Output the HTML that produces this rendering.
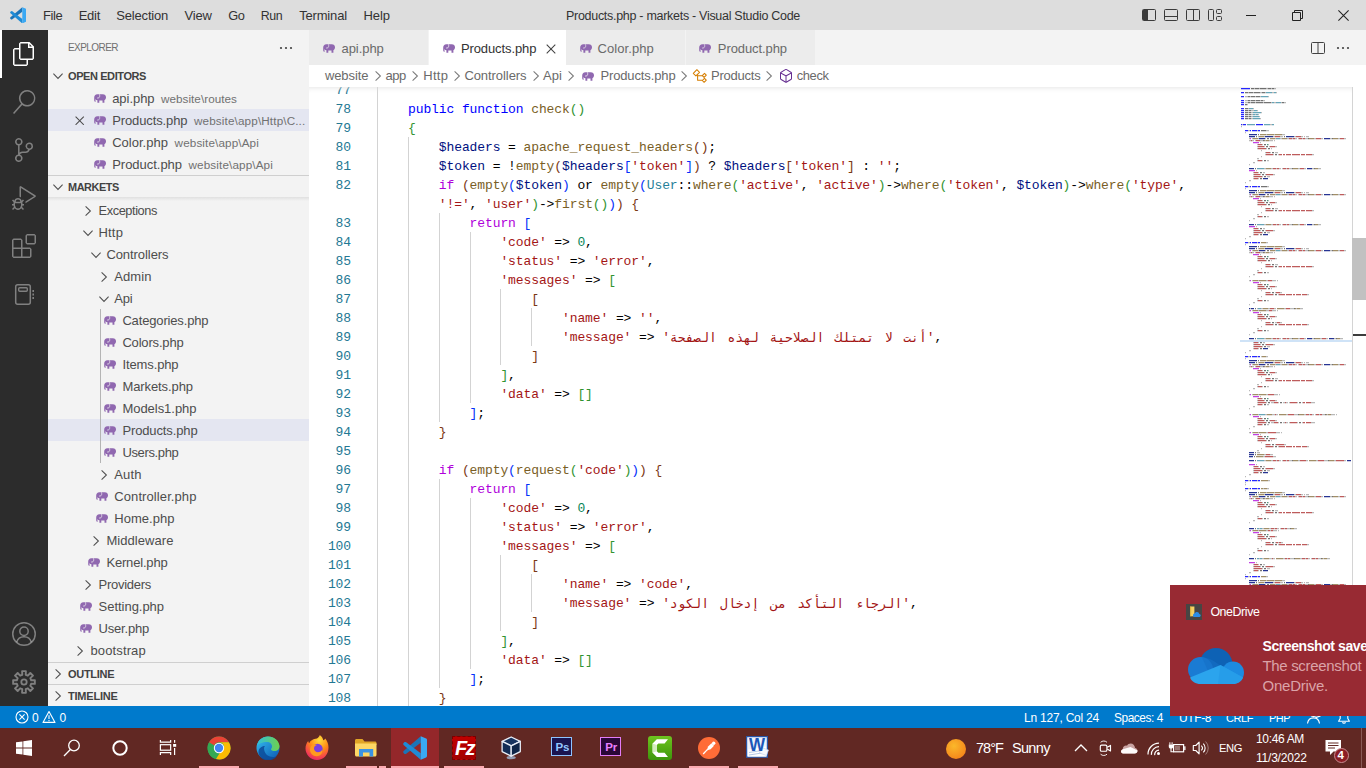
<!DOCTYPE html>
<html lang="en"><head><meta charset="utf-8"><title>Products.php - markets - Visual Studio Code</title>
<style>
html,body{margin:0;padding:0}
body{width:1366px;height:768px;overflow:hidden;position:relative;background:#fff;font-family:"Liberation Sans","DejaVu Sans",sans-serif;}
.b{position:absolute;display:block}
.t{position:absolute;white-space:pre;line-height:20px;height:20px}
.code{position:absolute;white-space:pre;font-family:"Liberation Mono","DejaVu Sans Mono",monospace;font-size:13px;letter-spacing:-0.1015px;line-height:19px;height:19px;color:#000}
.ln{position:absolute;white-space:pre;font-family:"Liberation Mono","DejaVu Sans Mono",monospace;font-size:13px;letter-spacing:-0.1015px;line-height:19px;height:19px;color:#237893;text-align:right;width:42px;left:309px}
.ar{font-family:"DejaVu Sans Mono","Liberation Mono",monospace;letter-spacing:0}
.k{color:#00f}.c{color:#af00db}.f{color:#795e26}.v{color:#001080}.s{color:#a31515}.n{color:#098658}.y{color:#267f99}
.b1{color:#0431fa}.b2{color:#319331}.b3{color:#7b3814}
</style></head><body>
<div class="b" style="left:0px;top:0px;width:1366px;height:30px;background:#dddddd;"></div>
<div class="b" style="left:0px;top:30px;width:48px;height:676px;background:#2c2c2c;"></div>
<div class="b" style="left:48px;top:30px;width:261px;height:676px;background:#f3f3f3;"></div>
<div class="b" style="left:309px;top:30px;width:1057px;height:35px;background:#f3f3f3;"></div>
<div class="b" style="left:0px;top:706px;width:1366px;height:22px;background:#007acc;"></div>
<div class="b" style="left:0px;top:728px;width:1366px;height:40px;background:#612823;"></div>
<svg class="b" style="left:9.5px;top:6.8px;" width="16.6" height="16.6" viewBox="0 0 100 100"><path fill="#1b74b8" d="M74 1L74 28L12 75.500L6.500 75L1.200 70V63.500Z"/><path fill="#1f8bd6" d="M74 99L74 72L12 24.500L6.500 25L1.200 30V36.500Z"/><path fill="#3aa8f3" d="M74 1L96.500 10.800Q100 12.500 100 16.400V83.600Q100 87.500 96.500 89.200L74 99Z"/></svg>
<span class="t" style="left:43.0px;top:6.0px;font-size:13px;color:#333;letter-spacing:-0.387px;">File</span>
<span class="t" style="left:78.7px;top:6.0px;font-size:13px;color:#333;letter-spacing:-0.275px;">Edit</span>
<span class="t" style="left:116.2px;top:6.0px;font-size:13px;color:#333;letter-spacing:-0.164px;">Selection</span>
<span class="t" style="left:184.5px;top:6.0px;font-size:13px;color:#333;letter-spacing:-0.211px;">View</span>
<span class="t" style="left:228.2px;top:6.0px;font-size:12.8px;color:#333;letter-spacing:-0.387px;">Go</span>
<span class="t" style="left:260.8px;top:6.0px;font-size:12.4px;color:#333;letter-spacing:-0.416px;">Run</span>
<span class="t" style="left:299.2px;top:6.0px;font-size:13px;color:#333;letter-spacing:-0.178px;">Terminal</span>
<span class="t" style="left:363.5px;top:6.0px;font-size:13px;color:#333;letter-spacing:-0.059px;">Help</span>
<span class="t" style="left:566.0px;top:6.0px;font-size:12.5px;color:#333;letter-spacing:-0.289px;">Products.php - markets - Visual Studio Code</span>
<svg class="b" style="left:1141px;top:7px;" width="16" height="16" viewBox="0 0 16 16"><rect x="1.500" y="2.500" width="13" height="11" rx="1" fill="none" stroke="#3b3b3b"/><rect x="2" y="3" width="5" height="10" fill="#3b3b3b"/></svg>
<svg class="b" style="left:1163px;top:7px;" width="16" height="16" viewBox="0 0 16 16"><rect x="1.500" y="2.500" width="13" height="11" rx="1" fill="none" stroke="#3b3b3b"/><path d="M2 9.500h12" stroke="#3b3b3b"/></svg>
<svg class="b" style="left:1185px;top:7px;" width="16" height="16" viewBox="0 0 16 16"><rect x="1.500" y="2.500" width="13" height="11" rx="1" fill="none" stroke="#3b3b3b"/><path d="M8.500 3v10" stroke="#3b3b3b"/></svg>
<svg class="b" style="left:1207px;top:7px;" width="16" height="16" viewBox="0 0 16 16"><rect x="1.500" y="2.500" width="5" height="11" rx="1" fill="none" stroke="#3b3b3b"/><rect x="9.500" y="2.500" width="5" height="4" rx="1" fill="none" stroke="#3b3b3b"/><rect x="9.500" y="9.500" width="5" height="4" rx="1" fill="none" stroke="#3b3b3b"/></svg>
<svg class="b" style="left:1246px;top:10px;" width="11" height="11" viewBox="0 0 11 11"><path d="M0 5.500h10" stroke="#222" stroke-width="1"/></svg>
<svg class="b" style="left:1292px;top:10px;" width="11" height="11" viewBox="0 0 11 11"><path d="M0.500 2.500h8v8h-8z M2.500 2.500v-2h8v8h-2" fill="none" stroke="#222" stroke-width="1"/></svg>
<svg class="b" style="left:1338px;top:9.5px;" width="11" height="11" viewBox="0 0 11 11"><path d="M0.400 0.400l10.200 10.200M10.600 0.400l-10.200 10.200" stroke="#222" stroke-width="1.050"/></svg>
<div class="b" style="left:0px;top:30px;width:2px;height:48px;background:#ffffff;"></div>
<svg class="b" style="left:12px;top:42px;" width="24" height="24" viewBox="0 0 24 24"><path fill="#fff" d="M17.500 0h-9L7 1.500V6H2.500L1 7.500v15.070L2.500 24h12.070L16 22.570V18h4.700l1.300-1.430V4.500L17.500 0zm0 2.120l2.380 2.380H17.500V2.120zm-3 20.380h-12v-15H7v9.070L8.500 18h6v4.500zm6-6h-12v-15H16V6h4.500v10.500z"/></svg>
<svg class="b" style="left:12px;top:90px;" width="24" height="24" viewBox="0 0 24 24"><path fill="rgba(255,255,255,.4)" d="M15.250 0a8.250 8.250 0 0 0-6.180 13.720L1 22.880l1.120 1.120 8.050-9.120A8.251 8.251 0 1 0 15.250.010V0zm0 15a6.750 6.750 0 1 1 0-13.500 6.750 6.750 0 0 1 0 13.500z"/></svg>
<svg class="b" style="left:12px;top:138px;" width="24" height="24" viewBox="0 0 24 24"><path fill="rgba(255,255,255,.4)" d="M21.007 8.222A3.738 3.738 0 0 0 15.045 5.200a3.737 3.737 0 0 0 1.156 6.583 2.988 2.988 0 0 1-2.668 1.670h-2.990a4.456 4.456 0 0 0-2.989 1.165V7.400a3.737 3.737 0 1 0-1.494 0v9.117a3.776 3.776 0 1 0 1.816.099 2.990 2.990 0 0 1 2.668-1.667h2.990a4.484 4.484 0 0 0 4.223-3.039 3.736 3.736 0 0 0 3.250-3.687zM4.565 3.738a2.242 2.242 0 1 1 4.484 0 2.242 2.242 0 0 1-4.484 0zm4.484 16.441a2.242 2.242 0 1 1-4.484 0 2.242 2.242 0 0 1 4.484 0zm8.221-9.715a2.242 2.242 0 1 1 0-4.485 2.242 2.242 0 0 1 0 4.485z"/></svg>
<svg class="b" style="left:12px;top:186px;" width="24" height="24" viewBox="0 0 24 24"><path fill="rgba(255,255,255,.4)" d="M10.940 13.500l-1.320 1.320a3.730 3.730 0 0 0-7.240 0L1.060 13.500 0 14.560l1.720 1.720-.220.220V18H0v1.500h1.500v.080c.077.489.214.966.410 1.420L0 22.940 1.060 24l1.650-1.650A4.308 4.308 0 0 0 6 24a4.310 4.310 0 0 0 3.290-1.650L10.940 24 12 22.940 10.090 21c.198-.464.336-.951.410-1.450v-.100H12V18h-1.500v-1.500l-.220-.220L12 14.560l-1.060-1.060zM6 13.500a2.250 2.250 0 0 1 2.250 2.250h-4.500A2.250 2.250 0 0 1 6 13.500zm3 6a3.330 3.330 0 0 1-3 3 3.330 3.330 0 0 1-3-3v-2.250h6v2.250zm14.760-9.900v1.260L13.500 17.370V15.600l8.500-5.370L9 2v9.460a5.070 5.070 0 0 0-1.500-.720V.630L8.640 0l15.120 9.600z"/></svg>
<svg class="b" style="left:12px;top:234px;" width="24" height="24" viewBox="0 0 24 24"><path fill="rgba(255,255,255,.4)" d="M13.500 1.500L15 0h7.500L24 1.500V9l-1.500 1.500H15L13.500 9V1.500zm1.500 0V9h7.500V1.500H15zM0 15V6l1.500-1.500H9L10.500 6v7.500H18l1.500 1.500v7.500L18 24H1.500L0 22.500V15zm9-1.500V6H1.500v7.500H9zM9 15H1.500v7.500H9V15zm1.500 7.500H18V15h-7.500v7.500z"/></svg>
<svg class="b" style="left:12px;top:282px;" width="24" height="24" viewBox="0 0 24 24"><rect x="3.700" y="2.700" width="14.600" height="19.600" rx="2" fill="none" stroke="rgba(255,255,255,.4)" stroke-width="1.500"/><rect x="6.700" y="5.700" width="8.600" height="3.600" rx="1" fill="none" stroke="rgba(255,255,255,.4)" stroke-width="1.400"/><path d="M21.200 8v2M21.200 11.500v2M21.200 15v2" stroke="rgba(255,255,255,.4)" stroke-width="1.600"/></svg>
<svg class="b" style="left:12px;top:622px;" width="24" height="24" viewBox="0 0 24 24"><circle cx="12" cy="12" r="11.250" fill="none" stroke="rgba(255,255,255,.4)" stroke-width="1.500"/><circle cx="12" cy="9.300" r="4.200" fill="none" stroke="rgba(255,255,255,.4)" stroke-width="1.500"/><path d="M4.700 20.300c.900-3.600 3.700-5.600 7.300-5.600s6.400 2 7.300 5.600" fill="none" stroke="rgba(255,255,255,.4)" stroke-width="1.500"/></svg>
<svg class="b" style="left:12px;top:670px;" width="24" height="24" viewBox="0 0 24 24"><path d="M10.11 1.16L13.89 1.16L13.73 4.80L15.87 5.69L18.33 3.00L21.00 5.67L18.31 8.13L19.20 10.27L22.84 10.11L22.84 13.89L19.20 13.73L18.31 15.87L21.00 18.33L18.33 21.00L15.87 18.31L13.73 19.20L13.89 22.84L10.11 22.84L10.27 19.20L8.13 18.31L5.67 21.00L3.00 18.33L5.69 15.87L4.80 13.73L1.16 13.89L1.16 10.11L4.80 10.27L5.69 8.13L3.00 5.67L5.67 3.00L8.13 5.69L10.27 4.80Z" fill="none" stroke="rgba(255,255,255,.4)" stroke-width="1.900" stroke-linejoin="round"/><circle cx="12" cy="12" r="2.700" fill="none" stroke="rgba(255,255,255,.4)" stroke-width="1.800"/></svg>
<span class="t" style="left:68.0px;top:38.0px;font-size:10px;color:#6f6f6f;letter-spacing:-0.558px;">EXPLORER</span>
<svg class="b" style="left:278px;top:40px;" width="16" height="16" viewBox="0 0 16 16"><circle cx="3" cy="8" r="1.100" fill="#424242"/><circle cx="8" cy="8" r="1.100" fill="#424242"/><circle cx="13" cy="8" r="1.100" fill="#424242"/></svg>
<svg class="b" style="left:50px;top:68px;" width="16" height="16" viewBox="0 0 16 16"><path d="M3.400 5.600L8 10.400L12.600 5.600" fill="none" stroke="#4f4f4f" stroke-width="1.050"/></svg>
<span class="t" style="left:68.0px;top:66.0px;font-size:11px;color:#424242;letter-spacing:-0.410px;font-weight:700;">OPEN EDITORS</span>
<div class="b" style="left:48px;top:109px;width:261px;height:22px;background:#e4e6f1;"></div>
<svg class="b" style="left:75.3px;top:115.7px;" width="9.4" height="9.4" viewBox="0 0 9.4 9.4"><path d="M0.600 0.600l8.200 8.200M8.800 0.600l-8.200 8.200" stroke="#4a4a4a" stroke-width="1.050"/></svg>
<svg class="b" style="left:94px;top:93.5px;" width="12" height="9" viewBox="0 0 12 9"><path fill="#9068b0" d="M3.3 0.2C1.4 0.2 0.2 1.5 0.2 3.4V6.2c0 .9.5 1.5 1.2 1.6l.5-.9c-.4-.1-.6-.4-.6-.9V5.2c.5.6 1.3 1 2.1 1.1V8.8H5.3V6.6h3.2V8.8h1.9V6.2c1-.6 1.6-1.7 1.6-3C12 1.4 10.600.2 8.800.2z"/><path fill="none" stroke="#f3f3f3" stroke-width=".7" d="M5.400.3c.5.900.5 2.400-.3 3.300-.6.500-1.300.600-2 .400"/></svg>
<span class="t" style="left:112.2px;top:88.5px;font-size:13px;color:#4d4d4d;letter-spacing:-0.050px;">api.php</span>
<span class="t" style="left:161.0px;top:89.0px;font-size:11.7px;color:#717171;letter-spacing:0.040px;">website\routes</span>
<svg class="b" style="left:94px;top:115.5px;" width="12" height="9" viewBox="0 0 12 9"><path fill="#9068b0" d="M3.3 0.2C1.4 0.2 0.2 1.5 0.2 3.4V6.2c0 .9.5 1.5 1.2 1.6l.5-.9c-.4-.1-.6-.4-.6-.9V5.2c.5.6 1.3 1 2.1 1.1V8.8H5.3V6.6h3.2V8.8h1.9V6.2c1-.6 1.6-1.7 1.6-3C12 1.4 10.600.2 8.800.2z"/><path fill="none" stroke="#e4e6f1" stroke-width=".7" d="M5.400.3c.5.900.5 2.400-.3 3.300-.6.500-1.300.600-2 .400"/></svg>
<span class="t" style="left:112.2px;top:110.5px;font-size:13px;color:#4d4d4d;letter-spacing:-0.109px;">Products.php</span>
<span class="t" style="left:194.0px;top:111.0px;font-size:11.7px;color:#717171;letter-spacing:0.138px;">website\app\Http\C...</span>
<svg class="b" style="left:94px;top:137.5px;" width="12" height="9" viewBox="0 0 12 9"><path fill="#9068b0" d="M3.3 0.2C1.4 0.2 0.2 1.5 0.2 3.4V6.2c0 .9.5 1.5 1.2 1.6l.5-.9c-.4-.1-.6-.4-.6-.9V5.2c.5.6 1.3 1 2.1 1.1V8.8H5.3V6.6h3.2V8.8h1.9V6.2c1-.6 1.6-1.7 1.6-3C12 1.4 10.600.2 8.800.2z"/><path fill="none" stroke="#f3f3f3" stroke-width=".7" d="M5.400.3c.5.900.5 2.400-.3 3.300-.6.500-1.300.600-2 .400"/></svg>
<span class="t" style="left:112.2px;top:132.5px;font-size:13px;color:#4d4d4d;letter-spacing:0.017px;">Color.php</span>
<span class="t" style="left:174.6px;top:133.0px;font-size:11.7px;color:#717171;letter-spacing:0.120px;">website\app\Api</span>
<svg class="b" style="left:94px;top:159.5px;" width="12" height="9" viewBox="0 0 12 9"><path fill="#9068b0" d="M3.3 0.2C1.4 0.2 0.2 1.5 0.2 3.4V6.2c0 .9.5 1.5 1.2 1.6l.5-.9c-.4-.1-.6-.4-.6-.9V5.2c.5.6 1.3 1 2.1 1.1V8.8H5.3V6.6h3.2V8.8h1.9V6.2c1-.6 1.6-1.7 1.6-3C12 1.4 10.600.2 8.800.2z"/><path fill="none" stroke="#f3f3f3" stroke-width=".7" d="M5.400.3c.5.900.5 2.400-.3 3.300-.6.500-1.300.600-2 .400"/></svg>
<span class="t" style="left:112.2px;top:154.5px;font-size:13px;color:#4d4d4d;letter-spacing:-0.028px;">Product.php</span>
<span class="t" style="left:188.5px;top:155.0px;font-size:11.7px;color:#717171;letter-spacing:0.126px;">website\app\Api</span>
<div class="b" style="left:48px;top:175px;width:261px;height:1px;background:#cfcfcf;"></div>
<svg class="b" style="left:50px;top:179px;" width="16" height="16" viewBox="0 0 16 16"><path d="M3.400 5.600L8 10.400L12.600 5.600" fill="none" stroke="#4f4f4f" stroke-width="1.050"/></svg>
<span class="t" style="left:68.0px;top:177.0px;font-size:10.9px;color:#424242;letter-spacing:-0.413px;font-weight:700;">MARKETS</span>
<div class="b" style="left:48px;top:197px;width:261px;height:4px;background:linear-gradient(#e0e0e0,rgba(243,243,243,0))"></div>
<div class="b" style="left:48px;top:419px;width:261px;height:22px;background:#e4e6f1;"></div>
<div class="b" style="left:100px;top:309px;width:1px;height:154px;background:#b4b4b4;"></div>
<svg class="b" style="left:79.5px;top:202.5px;" width="16" height="16" viewBox="0 0 16 16"><path d="M5.600 3.400L10.400 8L5.600 12.600" fill="none" stroke="#4f4f4f" stroke-width="1.050"/></svg>
<span class="t" style="left:98.6px;top:200.5px;font-size:12.8px;color:#4d4d4d;letter-spacing:-0.421px;">Exceptions</span>
<svg class="b" style="left:79.5px;top:224.5px;" width="16" height="16" viewBox="0 0 16 16"><path d="M3.400 5.600L8 10.400L12.600 5.600" fill="none" stroke="#4f4f4f" stroke-width="1.050"/></svg>
<span class="t" style="left:98.6px;top:222.5px;font-size:13px;color:#4d4d4d;letter-spacing:0.140px;">Http</span>
<svg class="b" style="left:87.5px;top:246.5px;" width="16" height="16" viewBox="0 0 16 16"><path d="M3.400 5.600L8 10.400L12.600 5.600" fill="none" stroke="#4f4f4f" stroke-width="1.050"/></svg>
<span class="t" style="left:106.4px;top:244.5px;font-size:13px;color:#4d4d4d;letter-spacing:-0.069px;">Controllers</span>
<svg class="b" style="left:95.5px;top:268.5px;" width="16" height="16" viewBox="0 0 16 16"><path d="M5.600 3.400L10.400 8L5.600 12.600" fill="none" stroke="#4f4f4f" stroke-width="1.050"/></svg>
<span class="t" style="left:114.3px;top:266.5px;font-size:13px;color:#4d4d4d;letter-spacing:0.070px;">Admin</span>
<svg class="b" style="left:95.5px;top:290.5px;" width="16" height="16" viewBox="0 0 16 16"><path d="M3.400 5.600L8 10.400L12.600 5.600" fill="none" stroke="#4f4f4f" stroke-width="1.050"/></svg>
<span class="t" style="left:114.3px;top:288.5px;font-size:13px;color:#4d4d4d;letter-spacing:-0.196px;">Api</span>
<svg class="b" style="left:104px;top:315.5px;" width="12" height="9" viewBox="0 0 12 9"><path fill="#9068b0" d="M3.3 0.2C1.4 0.2 0.2 1.5 0.2 3.4V6.2c0 .9.5 1.5 1.2 1.6l.5-.9c-.4-.1-.6-.4-.6-.9V5.2c.5.6 1.3 1 2.1 1.1V8.8H5.3V6.6h3.2V8.8h1.9V6.2c1-.6 1.6-1.7 1.6-3C12 1.4 10.600.2 8.800.2z"/><path fill="none" stroke="#f3f3f3" stroke-width=".7" d="M5.400.3c.5.900.5 2.400-.3 3.300-.6.500-1.300.600-2 .400"/></svg>
<span class="t" style="left:122.4px;top:310.5px;font-size:13px;color:#4d4d4d;letter-spacing:-0.155px;">Categories.php</span>
<svg class="b" style="left:104px;top:337.5px;" width="12" height="9" viewBox="0 0 12 9"><path fill="#9068b0" d="M3.3 0.2C1.4 0.2 0.2 1.5 0.2 3.4V6.2c0 .9.5 1.5 1.2 1.6l.5-.9c-.4-.1-.6-.4-.6-.9V5.2c.5.6 1.3 1 2.1 1.1V8.8H5.3V6.6h3.2V8.8h1.9V6.2c1-.6 1.6-1.7 1.6-3C12 1.4 10.600.2 8.800.2z"/><path fill="none" stroke="#f3f3f3" stroke-width=".7" d="M5.400.3c.5.900.5 2.400-.3 3.300-.6.500-1.300.600-2 .400"/></svg>
<span class="t" style="left:122.4px;top:332.5px;font-size:13px;color:#4d4d4d;letter-spacing:-0.177px;">Colors.php</span>
<svg class="b" style="left:104px;top:359.5px;" width="12" height="9" viewBox="0 0 12 9"><path fill="#9068b0" d="M3.3 0.2C1.4 0.2 0.2 1.5 0.2 3.4V6.2c0 .9.5 1.5 1.2 1.6l.5-.9c-.4-.1-.6-.4-.6-.9V5.2c.5.6 1.3 1 2.1 1.1V8.8H5.3V6.6h3.2V8.8h1.9V6.2c1-.6 1.6-1.7 1.6-3C12 1.4 10.600.2 8.800.2z"/><path fill="none" stroke="#f3f3f3" stroke-width=".7" d="M5.400.3c.5.900.5 2.400-.3 3.300-.6.500-1.300.600-2 .400"/></svg>
<span class="t" style="left:122.4px;top:354.5px;font-size:13px;color:#4d4d4d;letter-spacing:-0.109px;">Items.php</span>
<svg class="b" style="left:104px;top:381.5px;" width="12" height="9" viewBox="0 0 12 9"><path fill="#9068b0" d="M3.3 0.2C1.4 0.2 0.2 1.5 0.2 3.4V6.2c0 .9.5 1.5 1.2 1.6l.5-.9c-.4-.1-.6-.4-.6-.9V5.2c.5.6 1.3 1 2.1 1.1V8.8H5.3V6.6h3.2V8.8h1.9V6.2c1-.6 1.6-1.7 1.6-3C12 1.4 10.600.2 8.800.2z"/><path fill="none" stroke="#f3f3f3" stroke-width=".7" d="M5.400.3c.5.900.5 2.400-.3 3.300-.6.500-1.300.600-2 .400"/></svg>
<span class="t" style="left:122.4px;top:376.5px;font-size:13px;color:#4d4d4d;letter-spacing:-0.085px;">Markets.php</span>
<svg class="b" style="left:104px;top:403.5px;" width="12" height="9" viewBox="0 0 12 9"><path fill="#9068b0" d="M3.3 0.2C1.4 0.2 0.2 1.5 0.2 3.4V6.2c0 .9.5 1.5 1.2 1.6l.5-.9c-.4-.1-.6-.4-.6-.9V5.2c.5.6 1.3 1 2.1 1.1V8.8H5.3V6.6h3.2V8.8h1.9V6.2c1-.6 1.6-1.7 1.6-3C12 1.4 10.600.2 8.800.2z"/><path fill="none" stroke="#f3f3f3" stroke-width=".7" d="M5.400.3c.5.900.5 2.400-.3 3.300-.6.500-1.300.600-2 .400"/></svg>
<span class="t" style="left:122.4px;top:398.5px;font-size:13px;color:#4d4d4d;letter-spacing:-0.031px;">Models1.php</span>
<svg class="b" style="left:104px;top:425.5px;" width="12" height="9" viewBox="0 0 12 9"><path fill="#9068b0" d="M3.3 0.2C1.4 0.2 0.2 1.5 0.2 3.4V6.2c0 .9.5 1.5 1.2 1.6l.5-.9c-.4-.1-.6-.4-.6-.9V5.2c.5.6 1.3 1 2.1 1.1V8.8H5.3V6.6h3.2V8.8h1.9V6.2c1-.6 1.6-1.7 1.6-3C12 1.4 10.600.2 8.800.2z"/><path fill="none" stroke="#e4e6f1" stroke-width=".7" d="M5.400.3c.5.900.5 2.400-.3 3.300-.6.500-1.300.600-2 .400"/></svg>
<span class="t" style="left:122.4px;top:420.5px;font-size:13px;color:#4d4d4d;letter-spacing:-0.125px;">Products.php</span>
<svg class="b" style="left:104px;top:447.5px;" width="12" height="9" viewBox="0 0 12 9"><path fill="#9068b0" d="M3.3 0.2C1.4 0.2 0.2 1.5 0.2 3.4V6.2c0 .9.5 1.5 1.2 1.6l.5-.9c-.4-.1-.6-.4-.6-.9V5.2c.5.6 1.3 1 2.1 1.1V8.8H5.3V6.6h3.2V8.8h1.9V6.2c1-.6 1.6-1.7 1.6-3C12 1.4 10.600.2 8.800.2z"/><path fill="none" stroke="#f3f3f3" stroke-width=".7" d="M5.400.3c.5.900.5 2.400-.3 3.300-.6.500-1.300.600-2 .400"/></svg>
<span class="t" style="left:122.4px;top:442.5px;font-size:13px;color:#4d4d4d;letter-spacing:-0.350px;">Users.php</span>
<svg class="b" style="left:95.5px;top:466.5px;" width="16" height="16" viewBox="0 0 16 16"><path d="M5.600 3.400L10.400 8L5.600 12.600" fill="none" stroke="#4f4f4f" stroke-width="1.050"/></svg>
<span class="t" style="left:114.3px;top:464.5px;font-size:13px;color:#4d4d4d;letter-spacing:0.114px;">Auth</span>
<svg class="b" style="left:96px;top:491.5px;" width="12" height="9" viewBox="0 0 12 9"><path fill="#9068b0" d="M3.3 0.2C1.4 0.2 0.2 1.5 0.2 3.4V6.2c0 .9.5 1.5 1.2 1.6l.5-.9c-.4-.1-.6-.4-.6-.9V5.2c.5.6 1.3 1 2.1 1.1V8.8H5.3V6.6h3.2V8.8h1.9V6.2c1-.6 1.6-1.7 1.6-3C12 1.4 10.600.2 8.800.2z"/><path fill="none" stroke="#f3f3f3" stroke-width=".7" d="M5.400.3c.5.900.5 2.400-.3 3.300-.6.500-1.300.600-2 .400"/></svg>
<span class="t" style="left:114.3px;top:486.5px;font-size:13px;color:#4d4d4d;letter-spacing:0.090px;">Controller.php</span>
<svg class="b" style="left:96px;top:513.5px;" width="12" height="9" viewBox="0 0 12 9"><path fill="#9068b0" d="M3.3 0.2C1.4 0.2 0.2 1.5 0.2 3.4V6.2c0 .9.5 1.5 1.2 1.6l.5-.9c-.4-.1-.6-.4-.6-.9V5.2c.5.6 1.3 1 2.1 1.1V8.8H5.3V6.6h3.2V8.8h1.9V6.2c1-.6 1.6-1.7 1.6-3C12 1.4 10.600.2 8.800.2z"/><path fill="none" stroke="#f3f3f3" stroke-width=".7" d="M5.400.3c.5.900.5 2.400-.3 3.300-.6.500-1.300.600-2 .400"/></svg>
<span class="t" style="left:114.3px;top:508.5px;font-size:13px;color:#4d4d4d;letter-spacing:0.028px;">Home.php</span>
<svg class="b" style="left:87.5px;top:532.5px;" width="16" height="16" viewBox="0 0 16 16"><path d="M5.600 3.400L10.400 8L5.600 12.600" fill="none" stroke="#4f4f4f" stroke-width="1.050"/></svg>
<span class="t" style="left:106.4px;top:530.5px;font-size:13px;color:#4d4d4d;letter-spacing:0.063px;">Middleware</span>
<svg class="b" style="left:88px;top:557.5px;" width="12" height="9" viewBox="0 0 12 9"><path fill="#9068b0" d="M3.3 0.2C1.4 0.2 0.2 1.5 0.2 3.4V6.2c0 .9.5 1.5 1.2 1.6l.5-.9c-.4-.1-.6-.4-.6-.9V5.2c.5.6 1.3 1 2.1 1.1V8.8H5.3V6.6h3.2V8.8h1.9V6.2c1-.6 1.6-1.7 1.6-3C12 1.4 10.600.2 8.800.2z"/><path fill="none" stroke="#f3f3f3" stroke-width=".7" d="M5.400.3c.5.900.5 2.400-.3 3.300-.6.500-1.300.600-2 .400"/></svg>
<span class="t" style="left:106.4px;top:552.5px;font-size:13px;color:#4d4d4d;letter-spacing:-0.178px;">Kernel.php</span>
<svg class="b" style="left:79.5px;top:576.5px;" width="16" height="16" viewBox="0 0 16 16"><path d="M5.600 3.400L10.400 8L5.600 12.600" fill="none" stroke="#4f4f4f" stroke-width="1.050"/></svg>
<span class="t" style="left:98.6px;top:574.5px;font-size:13px;color:#4d4d4d;letter-spacing:-0.279px;">Providers</span>
<svg class="b" style="left:80px;top:601.5px;" width="12" height="9" viewBox="0 0 12 9"><path fill="#9068b0" d="M3.3 0.2C1.4 0.2 0.2 1.5 0.2 3.4V6.2c0 .9.5 1.5 1.2 1.6l.5-.9c-.4-.1-.6-.4-.6-.9V5.2c.5.6 1.3 1 2.1 1.1V8.8H5.3V6.6h3.2V8.8h1.9V6.2c1-.6 1.6-1.7 1.6-3C12 1.4 10.600.2 8.800.2z"/><path fill="none" stroke="#f3f3f3" stroke-width=".7" d="M5.400.3c.5.900.5 2.400-.3 3.300-.6.500-1.300.600-2 .400"/></svg>
<span class="t" style="left:98.6px;top:596.5px;font-size:13px;color:#4d4d4d;letter-spacing:-0.034px;">Setting.php</span>
<svg class="b" style="left:80px;top:623.5px;" width="12" height="9" viewBox="0 0 12 9"><path fill="#9068b0" d="M3.3 0.2C1.4 0.2 0.2 1.5 0.2 3.4V6.2c0 .9.5 1.5 1.2 1.6l.5-.9c-.4-.1-.6-.4-.6-.9V5.2c.5.6 1.3 1 2.1 1.1V8.8H5.3V6.6h3.2V8.8h1.9V6.2c1-.6 1.6-1.7 1.6-3C12 1.4 10.600.2 8.800.2z"/><path fill="none" stroke="#f3f3f3" stroke-width=".7" d="M5.400.3c.5.900.5 2.400-.3 3.300-.6.500-1.300.600-2 .400"/></svg>
<span class="t" style="left:98.6px;top:618.5px;font-size:13px;color:#4d4d4d;letter-spacing:-0.204px;">User.php</span>
<svg class="b" style="left:71.5px;top:642.5px;" width="16" height="16" viewBox="0 0 16 16"><path d="M5.600 3.400L10.400 8L5.600 12.600" fill="none" stroke="#4f4f4f" stroke-width="1.050"/></svg>
<span class="t" style="left:90.5px;top:640.5px;font-size:13px;color:#4d4d4d;letter-spacing:0.122px;">bootstrap</span>
<div class="b" style="left:48px;top:662px;width:261px;height:1px;background:#cfcfcf;"></div>
<svg class="b" style="left:50px;top:666px;" width="16" height="16" viewBox="0 0 16 16"><path d="M5.600 3.400L10.400 8L5.600 12.600" fill="none" stroke="#4f4f4f" stroke-width="1.050"/></svg>
<span class="t" style="left:68.0px;top:664.0px;font-size:11px;color:#424242;letter-spacing:-0.282px;font-weight:700;">OUTLINE</span>
<div class="b" style="left:48px;top:684px;width:261px;height:1px;background:#cfcfcf;"></div>
<svg class="b" style="left:50px;top:688px;" width="16" height="16" viewBox="0 0 16 16"><path d="M5.600 3.400L10.400 8L5.600 12.600" fill="none" stroke="#4f4f4f" stroke-width="1.050"/></svg>
<span class="t" style="left:68.0px;top:686.0px;font-size:11px;color:#424242;letter-spacing:-0.216px;font-weight:700;">TIMELINE</span>
<div class="b" style="left:309px;top:30px;width:119px;height:35px;background:#ececec;"></div>
<div class="b" style="left:428px;top:30px;width:1px;height:35px;background:#f3f3f3;"></div>
<div class="b" style="left:429px;top:30px;width:137px;height:35px;background:#ffffff;"></div>
<div class="b" style="left:566px;top:30px;width:119px;height:35px;background:#ececec;"></div>
<div class="b" style="left:685px;top:30px;width:1px;height:35px;background:#f3f3f3;"></div>
<div class="b" style="left:686px;top:30px;width:129px;height:35px;background:#ececec;"></div>
<div class="b" style="left:815px;top:30px;width:1px;height:35px;background:#f3f3f3;"></div>
<svg class="b" style="left:323px;top:43.5px;" width="12" height="9" viewBox="0 0 12 9"><path fill="#9068b0" d="M3.3 0.2C1.4 0.2 0.2 1.5 0.2 3.4V6.2c0 .9.5 1.5 1.2 1.6l.5-.9c-.4-.1-.6-.4-.6-.9V5.2c.5.6 1.3 1 2.1 1.1V8.8H5.3V6.6h3.2V8.8h1.9V6.2c1-.6 1.6-1.7 1.6-3C12 1.4 10.600.2 8.800.2z"/><path fill="none" stroke="#ececec" stroke-width=".7" d="M5.400.3c.5.900.5 2.400-.3 3.300-.6.500-1.300.600-2 .400"/></svg>
<span class="t" style="left:341.5px;top:38.5px;font-size:13px;color:#6a6a6a;letter-spacing:-0.050px;">api.php</span>
<svg class="b" style="left:442.5px;top:43.5px;" width="12" height="9" viewBox="0 0 12 9"><path fill="#9068b0" d="M3.3 0.2C1.4 0.2 0.2 1.5 0.2 3.4V6.2c0 .9.5 1.5 1.2 1.6l.5-.9c-.4-.1-.6-.4-.6-.9V5.2c.5.6 1.3 1 2.1 1.1V8.8H5.3V6.6h3.2V8.8h1.9V6.2c1-.6 1.6-1.7 1.6-3C12 1.4 10.600.2 8.800.2z"/><path fill="none" stroke="#fff" stroke-width=".7" d="M5.400.3c.5.900.5 2.400-.3 3.300-.6.500-1.300.600-2 .400"/></svg>
<span class="t" style="left:460.9px;top:38.5px;font-size:13px;color:#333;letter-spacing:-0.092px;">Products.php</span>
<svg class="b" style="left:546px;top:43.5px;" width="10" height="10" viewBox="0 0 10 10"><path d="M0.700 0.700l8.600 8.600M9.300 0.700l-8.600 8.600" stroke="#424242" stroke-width="1.050"/></svg>
<svg class="b" style="left:579.5px;top:43.5px;" width="12" height="9" viewBox="0 0 12 9"><path fill="#9068b0" d="M3.3 0.2C1.4 0.2 0.2 1.5 0.2 3.4V6.2c0 .9.5 1.5 1.2 1.6l.5-.9c-.4-.1-.6-.4-.6-.9V5.2c.5.6 1.3 1 2.1 1.1V8.8H5.3V6.6h3.2V8.8h1.9V6.2c1-.6 1.6-1.7 1.6-3C12 1.4 10.600.2 8.800.2z"/><path fill="none" stroke="#ececec" stroke-width=".7" d="M5.400.3c.5.900.5 2.400-.3 3.300-.6.500-1.300.600-2 .400"/></svg>
<span class="t" style="left:597.6px;top:38.5px;font-size:13px;color:#6a6a6a;letter-spacing:0.061px;">Color.php</span>
<svg class="b" style="left:699.2px;top:43.5px;" width="12" height="9" viewBox="0 0 12 9"><path fill="#9068b0" d="M3.3 0.2C1.4 0.2 0.2 1.5 0.2 3.4V6.2c0 .9.5 1.5 1.2 1.6l.5-.9c-.4-.1-.6-.4-.6-.9V5.2c.5.6 1.3 1 2.1 1.1V8.8H5.3V6.6h3.2V8.8h1.9V6.2c1-.6 1.6-1.7 1.6-3C12 1.4 10.600.2 8.800.2z"/><path fill="none" stroke="#ececec" stroke-width=".7" d="M5.400.3c.5.900.5 2.400-.3 3.300-.6.500-1.300.600-2 .400"/></svg>
<span class="t" style="left:717.8px;top:38.5px;font-size:13px;color:#6a6a6a;letter-spacing:-0.082px;">Product.php</span>
<svg class="b" style="left:1310px;top:39.5px;" width="16" height="16" viewBox="0 0 16 16"><rect x="1.500" y="2.500" width="13" height="11" rx="1" fill="none" stroke="#424242"/><path d="M8 3v10" stroke="#424242"/></svg>
<svg class="b" style="left:1335px;top:40px;" width="16" height="16" viewBox="0 0 16 16"><circle cx="3" cy="8" r="1.100" fill="#424242"/><circle cx="8" cy="8" r="1.100" fill="#424242"/><circle cx="13" cy="8" r="1.100" fill="#424242"/></svg>
<span class="t" style="left:324.9px;top:66.0px;font-size:13px;color:#6a6a6a;letter-spacing:-0.083px;">website</span>
<span class="t" style="left:385.4px;top:66.0px;font-size:13px;color:#6a6a6a;letter-spacing:-0.363px;">app</span>
<span class="t" style="left:423.3px;top:66.0px;font-size:13px;color:#6a6a6a;letter-spacing:0.265px;">Http</span>
<span class="t" style="left:464.4px;top:66.0px;font-size:13px;color:#6a6a6a;letter-spacing:-0.069px;">Controllers</span>
<span class="t" style="left:543.0px;top:66.0px;font-size:13px;color:#6a6a6a;letter-spacing:0.070px;">Api</span>
<span class="t" style="left:600.4px;top:66.0px;font-size:13px;color:#6a6a6a;letter-spacing:-0.125px;">Products.php</span>
<span class="t" style="left:711.0px;top:66.0px;font-size:13px;color:#6a6a6a;letter-spacing:-0.225px;">Products</span>
<span class="t" style="left:796.8px;top:66.0px;font-size:12.9px;color:#6a6a6a;letter-spacing:-0.400px;">check</span>
<svg class="b" style="left:370.3px;top:68.3px;" width="16" height="16" viewBox="0 0 16 16"><path d="M5.600 3.400L10.400 8L5.600 12.600" fill="none" stroke="#7a7a7a" stroke-width="1.050"/></svg>
<svg class="b" style="left:406.6px;top:68.3px;" width="16" height="16" viewBox="0 0 16 16"><path d="M5.600 3.400L10.400 8L5.600 12.600" fill="none" stroke="#7a7a7a" stroke-width="1.050"/></svg>
<svg class="b" style="left:449px;top:68.3px;" width="16" height="16" viewBox="0 0 16 16"><path d="M5.600 3.400L10.400 8L5.600 12.600" fill="none" stroke="#7a7a7a" stroke-width="1.050"/></svg>
<svg class="b" style="left:527.6px;top:68.3px;" width="16" height="16" viewBox="0 0 16 16"><path d="M5.600 3.400L10.400 8L5.600 12.600" fill="none" stroke="#7a7a7a" stroke-width="1.050"/></svg>
<svg class="b" style="left:562.8px;top:68.3px;" width="16" height="16" viewBox="0 0 16 16"><path d="M5.600 3.400L10.400 8L5.600 12.600" fill="none" stroke="#7a7a7a" stroke-width="1.050"/></svg>
<svg class="b" style="left:676px;top:68.3px;" width="16" height="16" viewBox="0 0 16 16"><path d="M5.600 3.400L10.400 8L5.600 12.600" fill="none" stroke="#7a7a7a" stroke-width="1.050"/></svg>
<svg class="b" style="left:761px;top:68.3px;" width="16" height="16" viewBox="0 0 16 16"><path d="M5.600 3.400L10.400 8L5.600 12.600" fill="none" stroke="#7a7a7a" stroke-width="1.050"/></svg>
<svg class="b" style="left:582px;top:71.5px;" width="12" height="9" viewBox="0 0 12 9"><path fill="#9068b0" d="M3.3 0.2C1.4 0.2 0.2 1.5 0.2 3.4V6.2c0 .9.5 1.5 1.2 1.6l.5-.9c-.4-.1-.6-.4-.6-.9V5.2c.5.6 1.3 1 2.1 1.1V8.8H5.3V6.6h3.2V8.8h1.9V6.2c1-.6 1.6-1.7 1.6-3C12 1.4 10.600.2 8.800.2z"/><path fill="none" stroke="#fff" stroke-width=".7" d="M5.400.3c.5.900.5 2.400-.3 3.300-.6.500-1.300.600-2 .400"/></svg>
<svg class="b" style="left:692px;top:68px;" width="16" height="16" viewBox="0 0 16 16"><g fill="none" stroke="#d67e00" stroke-width="1.050" stroke-linejoin="round"><path d="M1.300 5.300L4.900 1.700L7.500 4.300L3.900 7.900Z"/><path d="M5.600 6.400V12.300H10.400M5.600 7.800H10.200"/><path d="M10.300 7.600L12.500 5.400L14.300 7.200L12.100 9.400Z"/><path d="M10.300 12.500L12.500 10.300L14.300 12.100L12.100 14.300Z"/></g></svg>
<svg class="b" style="left:778px;top:68px;" width="16" height="16" viewBox="0 0 16 16"><path fill="#652d90" d="M13.510 4l-5-3h-1l-5 3-.490.860v6l.490.850 5 3h1l5-3 .490-.850v-6L13.510 4zm-6 9.560l-4.500-2.700V5.700l4.500 2.450v5.410zM3.270 4.700l4.740-2.840 4.740 2.840-4.740 2.590L3.270 4.700zm9.740 6.160l-4.500 2.700V8.150l4.500-2.450v5.160z"/></svg>
<div class="b" style="left:309px;top:87px;width:1057px;height:619px;overflow:hidden;background:#fff">
<div class="b" style="left:68px;top:-7px;width:1px;height:627px;background:#d3d3d3"></div>
<div class="b" style="left:99px;top:50px;width:1px;height:570px;background:#d3d3d3"></div>
<div class="b" style="left:130px;top:126px;width:1px;height:209px;background:#d3d3d3"></div>
<div class="b" style="left:130px;top:392px;width:1px;height:209px;background:#d3d3d3"></div>
<div class="b" style="left:161px;top:145px;width:1px;height:171px;background:#d3d3d3"></div>
<div class="b" style="left:161px;top:411px;width:1px;height:171px;background:#d3d3d3"></div>
<div class="b" style="left:191px;top:202px;width:1px;height:76px;background:#d3d3d3"></div>
<div class="b" style="left:191px;top:468px;width:1px;height:76px;background:#d3d3d3"></div>
<div class="b" style="left:222px;top:221px;width:1px;height:38px;background:#d3d3d3"></div>
<div class="b" style="left:222px;top:487px;width:1px;height:38px;background:#d3d3d3"></div>
<div class="ln" style="left:0;top:-6px">77</div>
<div class="ln" style="left:0;top:13px">78</div>
<div class="code" style="left:99.00px;top:13px"><span class="k">public</span> <span class="k">function</span> <span class="f">check</span><span class="b2">(</span><span class="b2">)</span></div>
<div class="ln" style="left:0;top:32px">79</div>
<div class="code" style="left:99.00px;top:32px"><span class="b2">{</span></div>
<div class="ln" style="left:0;top:51px">80</div>
<div class="code" style="left:129.80px;top:51px"><span class="v">$headers</span> = <span class="f">apache_request_headers</span><span class="b3">(</span><span class="b3">)</span>;</div>
<div class="ln" style="left:0;top:70px">81</div>
<div class="code" style="left:129.80px;top:70px"><span class="v">$token</span> = !<span class="f">empty</span><span class="b3">(</span><span class="v">$headers</span><span class="b1">[</span><span class="s">&#x27;token&#x27;</span><span class="b1">]</span><span class="b3">)</span> ? <span class="v">$headers</span><span class="b3">[</span><span class="s">&#x27;token&#x27;</span><span class="b3">]</span> : <span class="s">&#x27;&#x27;</span>;</div>
<div class="ln" style="left:0;top:89px">82</div>
<div class="code" style="left:129.80px;top:89px"><span class="c">if</span> <span class="b3">(</span><span class="f">empty</span><span class="b1">(</span><span class="v">$token</span><span class="b1">)</span> or <span class="f">empty</span><span class="b1">(</span><span class="y">User</span>::<span class="f">where</span><span class="b2">(</span><span class="s">&#x27;active&#x27;</span>, <span class="s">&#x27;active&#x27;</span><span class="b2">)</span>-&gt;<span class="f">where</span><span class="b2">(</span><span class="s">&#x27;token&#x27;</span>, <span class="v">$token</span><span class="b2">)</span>-&gt;<span class="f">where</span><span class="b2">(</span><span class="s">&#x27;type&#x27;</span>, </div>
<div class="code" style="left:129.80px;top:108px"><span class="s">&#x27;!=&#x27;</span>, <span class="s">&#x27;user&#x27;</span><span class="b2">)</span>-&gt;<span class="f">first</span><span class="b2">(</span><span class="b2">)</span><span class="b1">)</span><span class="b3">)</span> <span class="b3">{</span></div>
<div class="ln" style="left:0;top:127px">83</div>
<div class="code" style="left:160.60px;top:127px"><span class="c">return</span> <span class="b1">[</span></div>
<div class="ln" style="left:0;top:146px">84</div>
<div class="code" style="left:191.40px;top:146px"><span class="s">&#x27;code&#x27;</span> =&gt; <span class="n">0</span>,</div>
<div class="ln" style="left:0;top:165px">85</div>
<div class="code" style="left:191.40px;top:165px"><span class="s">&#x27;status&#x27;</span> =&gt; <span class="s">&#x27;error&#x27;</span>,</div>
<div class="ln" style="left:0;top:184px">86</div>
<div class="code" style="left:191.40px;top:184px"><span class="s">&#x27;messages&#x27;</span> =&gt; <span class="b2">[</span></div>
<div class="ln" style="left:0;top:203px">87</div>
<div class="code" style="left:222.20px;top:203px"><span class="b3">[</span></div>
<div class="ln" style="left:0;top:222px">88</div>
<div class="code" style="left:253.00px;top:222px"><span class="s">&#x27;name&#x27;</span> =&gt; <span class="s">&#x27;&#x27;</span>,</div>
<div class="ln" style="left:0;top:241px">89</div>
<div class="code" style="left:253.00px;top:241px"><span class="s">&#x27;message&#x27;</span> =&gt; <span class="s">'<span class="ar" dir="rtl" style="display:inline-block;width:256.9px;font-size:13px;text-align:justify;text-align-last:justify;vertical-align:top">أنت لا تمتلك الصلاحية لهذه الصفحة</span>'</span>,</div>
<div class="ln" style="left:0;top:260px">90</div>
<div class="code" style="left:222.20px;top:260px"><span class="b3">]</span></div>
<div class="ln" style="left:0;top:279px">91</div>
<div class="code" style="left:191.40px;top:279px"><span class="b2">]</span>,</div>
<div class="ln" style="left:0;top:298px">92</div>
<div class="code" style="left:191.40px;top:298px"><span class="s">&#x27;data&#x27;</span> =&gt; <span class="b2">[</span><span class="b2">]</span></div>
<div class="ln" style="left:0;top:317px">93</div>
<div class="code" style="left:160.60px;top:317px"><span class="b1">]</span>;</div>
<div class="ln" style="left:0;top:336px">94</div>
<div class="code" style="left:129.80px;top:336px"><span class="b3">}</span></div>
<div class="ln" style="left:0;top:355px">95</div>
<div class="ln" style="left:0;top:374px">96</div>
<div class="code" style="left:129.80px;top:374px"><span class="c">if</span> <span class="b3">(</span><span class="f">empty</span><span class="b1">(</span><span class="f">request</span><span class="b2">(</span><span class="s">&#x27;code&#x27;</span><span class="b2">)</span><span class="b1">)</span><span class="b3">)</span> <span class="b3">{</span></div>
<div class="ln" style="left:0;top:393px">97</div>
<div class="code" style="left:160.60px;top:393px"><span class="c">return</span> <span class="b1">[</span></div>
<div class="ln" style="left:0;top:412px">98</div>
<div class="code" style="left:191.40px;top:412px"><span class="s">&#x27;code&#x27;</span> =&gt; <span class="n">0</span>,</div>
<div class="ln" style="left:0;top:431px">99</div>
<div class="code" style="left:191.40px;top:431px"><span class="s">&#x27;status&#x27;</span> =&gt; <span class="s">&#x27;error&#x27;</span>,</div>
<div class="ln" style="left:0;top:450px">100</div>
<div class="code" style="left:191.40px;top:450px"><span class="s">&#x27;messages&#x27;</span> =&gt; <span class="b2">[</span></div>
<div class="ln" style="left:0;top:469px">101</div>
<div class="code" style="left:222.20px;top:469px"><span class="b3">[</span></div>
<div class="ln" style="left:0;top:488px">102</div>
<div class="code" style="left:253.00px;top:488px"><span class="s">&#x27;name&#x27;</span> =&gt; <span class="s">&#x27;code&#x27;</span>,</div>
<div class="ln" style="left:0;top:507px">103</div>
<div class="code" style="left:253.00px;top:507px"><span class="s">&#x27;message&#x27;</span> =&gt; <span class="s">'<span class="ar" dir="rtl" style="display:inline-block;width:232.4px;font-size:13px;text-align:justify;text-align-last:justify;vertical-align:top">الرجاء التأكد من إدخال الكود</span>'</span>,</div>
<div class="ln" style="left:0;top:526px">104</div>
<div class="code" style="left:222.20px;top:526px"><span class="b3">]</span></div>
<div class="ln" style="left:0;top:545px">105</div>
<div class="code" style="left:191.40px;top:545px"><span class="b2">]</span>,</div>
<div class="ln" style="left:0;top:564px">106</div>
<div class="code" style="left:191.40px;top:564px"><span class="s">&#x27;data&#x27;</span> =&gt; <span class="b2">[</span><span class="b2">]</span></div>
<div class="ln" style="left:0;top:583px">107</div>
<div class="code" style="left:160.60px;top:583px"><span class="b1">]</span>;</div>
<div class="ln" style="left:0;top:602px">108</div>
<div class="code" style="left:129.80px;top:602px"><span class="b3">}</span></div>
<div class="b" style="left:0;top:0;width:1043px;height:6px;box-shadow:#dddddd 0 6px 6px -6px inset"></div>
</div>
<svg class="b" style="left:1241px;top:87px;" width="110" height="619" viewBox="0 0 110 619"><path d="M0 1.6h9M0 5.6h3M0 9.6h3M0 13.6h3M0 15.6h3M0 17.6h3M0 21.6h3M0 23.6h3M0 25.6h3M0 27.6h3M0 29.6h3M0 31.6h3M0 37.6h1M2 37.6h3M15 37.6h7M4 43.6h3M9 43.6h1M11 43.6h5M17 43.6h2M4 99.6h3M9 99.6h1M11 99.6h5M17 99.6h2M4 155.6h3M9 155.6h1M11 155.6h5M17 155.6h2M4 269.6h3M9 269.6h1M11 269.6h5M17 269.6h2M4 393.6h3M9 393.6h1M11 393.6h5M17 393.6h2M4 401.6h3M9 401.6h1M11 401.6h5M17 401.6h2M4 489.6h3M9 489.6h1M11 489.6h5M17 489.6h2M4 601.6h3M9 601.6h1M11 601.6h5M17 601.6h2" stroke="#0000ff" stroke-width="1.100" opacity="0.85" fill="none"/><path d="M9 51.6h1M12 55.6h6M8 83.6h6M9 107.6h1M12 111.6h6M8 139.6h6M9 163.6h1M12 167.6h6M9 193.6h1M12 195.6h6M9 223.6h1M12 225.6h6M8 253.6h6M9 277.6h1M12 281.6h6M9 307.6h1M12 309.6h6M9 327.6h1M12 329.6h6M9 345.6h1M12 347.6h6M8 377.6h6M9 409.6h1M12 413.6h6M9 443.6h1M12 445.6h6M8 475.6h6M9 497.6h1M12 501.6h6M9 527.6h1M12 529.6h6M9 555.6h1M12 557.6h6M8 585.6h6M9 609.6h1M12 613.6h6" stroke="#af00db" stroke-width="1.100" opacity="0.75" fill="none"/><path d="M19 47.6h6M26 47.6h7M34 47.6h7M18 49.6h5M12 51.6h5M29 51.6h5M41 51.6h5M68 51.6h5M92 51.6h5M23 53.6h1M25 53.6h3M25 81.6h5M52 81.6h5M74 81.6h3M19 103.6h6M26 103.6h7M34 103.6h7M18 105.6h5M12 107.6h5M29 107.6h5M41 107.6h5M68 107.6h5M92 107.6h5M23 109.6h1M25 109.6h3M25 137.6h5M52 137.6h5M74 137.6h3M20 155.6h5M19 159.6h6M26 159.6h7M34 159.6h7M18 161.6h5M12 163.6h5M29 163.6h5M41 163.6h5M68 163.6h5M92 163.6h5M23 165.6h1M25 165.6h3M12 193.6h5M18 193.6h7M22 221.6h5M36 221.6h7M54 221.6h1M56 221.6h3M12 223.6h5M18 223.6h7M25 251.6h5M52 251.6h5M74 251.6h5M96 251.6h3M21 269.6h4M19 273.6h6M26 273.6h7M34 273.6h7M18 275.6h5M12 277.6h5M29 277.6h5M41 277.6h5M68 277.6h5M92 277.6h5M23 279.6h1M25 279.6h3M12 307.6h5M18 307.6h7M12 327.6h5M26 327.6h5M38 327.6h7M58 327.6h5M85 327.6h1M87 327.6h3M12 345.6h5M18 345.6h7M16 367.6h7M15 369.6h7M25 373.6h5M52 373.6h5M68 373.6h7M88 373.6h5M113 373.6h3M20 393.6h7M20 401.6h2M23 401.6h3M19 405.6h6M26 405.6h7M34 405.6h7M18 407.6h5M12 409.6h5M29 409.6h5M41 409.6h5M68 409.6h5M92 409.6h5M23 411.6h1M25 411.6h3M23 441.6h5M50 441.6h3M12 443.6h5M18 443.6h7M23 471.6h5M35 471.6h7M54 471.6h5M81 471.6h1M83 471.6h3M20 489.6h5M19 493.6h6M26 493.6h7M34 493.6h7M18 495.6h5M12 497.6h5M29 497.6h5M41 497.6h5M68 497.6h5M92 497.6h5M23 499.6h1M25 499.6h3M12 527.6h5M18 527.6h7M12 555.6h5M18 555.6h7M25 583.6h5M52 583.6h5M74 583.6h3M20 601.6h6M19 605.6h6M26 605.6h7M34 605.6h7M18 607.6h5M12 609.6h5M29 609.6h5M41 609.6h5M68 609.6h5M92 609.6h5M23 611.6h1M25 611.6h3" stroke="#795e26" stroke-width="1.100" opacity="0.7" fill="none"/><path d="M8 47.6h8M8 49.6h6M24 49.6h8M45 49.6h8M18 51.6h6M83 51.6h6M8 81.6h5M66 81.6h5M22 91.6h5M8 103.6h8M8 105.6h6M24 105.6h8M45 105.6h8M18 107.6h6M83 107.6h6M8 137.6h5M66 137.6h5M22 147.6h5M8 159.6h8M8 161.6h6M24 161.6h8M45 161.6h8M18 163.6h6M83 163.6h6M8 221.6h1M10 221.6h3M8 251.6h5M66 251.6h5M88 251.6h5M22 261.6h5M8 273.6h8M8 275.6h6M24 275.6h8M45 275.6h8M18 277.6h6M83 277.6h6M8 365.6h5M8 367.6h5M8 369.6h4M8 373.6h5M106 373.6h4M22 385.6h5M8 405.6h8M8 407.6h6M24 407.6h8M45 407.6h8M18 409.6h6M83 409.6h6M8 441.6h5M8 471.6h5M22 483.6h5M8 493.6h8M8 495.6h6M24 495.6h8M45 495.6h8M18 497.6h6M83 497.6h6M8 583.6h5M66 583.6h5M22 593.6h5M8 605.6h8M8 607.6h6M24 607.6h8M45 607.6h8M18 609.6h6M83 609.6h6" stroke="#001080" stroke-width="1.100" opacity="0.85" fill="none"/><path d="M34 49.6h5M55 49.6h5M48 51.6h3M52 51.6h2M58 51.6h3M62 51.6h2M75 51.6h5M99 51.6h4M10 53.6h1M15 53.6h4M17 57.6h4M17 59.6h6M29 59.6h5M17 61.6h8M25 65.6h4M25 67.6h7M38 67.6h3M42 67.6h2M45 67.6h5M51 67.6h8M60 67.6h4M65 67.6h6M17 73.6h4M32 81.6h3M36 81.6h2M42 81.6h3M46 81.6h2M59 81.6h4M13 85.6h4M13 87.6h6M25 87.6h7M13 89.6h8M13 91.6h4M34 105.6h5M55 105.6h5M48 107.6h3M52 107.6h2M58 107.6h3M62 107.6h2M75 107.6h5M99 107.6h4M10 109.6h1M15 109.6h4M17 113.6h4M17 115.6h6M29 115.6h5M17 117.6h8M25 121.6h4M25 123.6h7M38 123.6h3M42 123.6h2M45 123.6h5M51 123.6h8M60 123.6h4M65 123.6h6M17 129.6h4M32 137.6h3M36 137.6h2M42 137.6h3M46 137.6h2M59 137.6h4M13 141.6h4M13 143.6h6M25 143.6h7M13 145.6h8M13 147.6h4M34 161.6h5M55 161.6h5M48 163.6h3M52 163.6h2M58 163.6h3M62 163.6h2M75 163.6h5M99 163.6h4M10 165.6h1M15 165.6h4M17 169.6h4M17 171.6h6M29 171.6h5M17 173.6h8M25 177.6h4M25 179.6h7M38 179.6h3M42 179.6h2M45 179.6h5M51 179.6h8M60 179.6h4M65 179.6h6M17 185.6h4M27 193.6h4M17 197.6h4M17 199.6h6M29 199.6h5M17 201.6h8M25 205.6h4M35 205.6h4M25 207.6h7M38 207.6h6M45 207.6h6M52 207.6h2M55 207.6h5M61 207.6h5M17 213.6h4M29 221.6h4M45 221.6h4M28 223.6h3M17 227.6h4M17 229.6h6M29 229.6h5M17 231.6h8M25 235.6h4M36 235.6h3M25 237.6h7M38 237.6h6M45 237.6h6M52 237.6h2M55 237.6h5M61 237.6h5M17 243.6h4M32 251.6h3M36 251.6h2M42 251.6h3M46 251.6h2M59 251.6h4M81 251.6h4M13 255.6h4M13 257.6h6M25 257.6h7M13 259.6h8M13 261.6h4M34 275.6h5M55 275.6h5M48 277.6h3M52 277.6h2M58 277.6h3M62 277.6h2M75 277.6h5M99 277.6h4M10 279.6h1M15 279.6h4M17 283.6h4M17 285.6h6M29 285.6h5M17 287.6h8M25 291.6h4M25 293.6h7M38 293.6h3M42 293.6h2M45 293.6h5M51 293.6h8M60 293.6h4M65 293.6h6M17 299.6h4M27 307.6h6M17 311.6h4M17 313.6h6M29 313.6h5M17 315.6h8M33 315.6h4M44 315.6h1M49 315.6h7M62 315.6h2M65 315.6h5M17 317.6h4M34 327.6h1M47 327.6h6M65 327.6h3M69 327.6h2M75 327.6h3M79 327.6h2M17 331.6h4M17 333.6h6M29 333.6h5M17 335.6h8M33 335.6h4M44 335.6h1M49 335.6h7M62 335.6h2M65 335.6h5M17 337.6h4M27 345.6h8M17 349.6h4M17 351.6h6M29 351.6h5M17 353.6h8M25 357.6h4M35 357.6h8M25 359.6h7M38 359.6h6M45 359.6h6M52 359.6h2M55 359.6h5M61 359.6h5M25 367.6h4M24 369.6h8M32 373.6h3M36 373.6h2M42 373.6h3M46 373.6h2M59 373.6h6M77 373.6h6M95 373.6h8M13 379.6h4M13 381.6h6M25 381.6h7M13 383.6h8M13 385.6h4M34 407.6h5M55 407.6h5M48 409.6h3M52 409.6h2M58 409.6h3M62 409.6h2M75 409.6h5M99 409.6h4M10 411.6h1M15 411.6h4M17 415.6h4M17 417.6h6M29 417.6h5M17 419.6h8M25 423.6h4M25 425.6h7M38 425.6h3M42 425.6h2M45 425.6h5M51 425.6h8M60 425.6h4M65 425.6h6M17 431.6h4M30 441.6h3M34 441.6h2M40 441.6h3M44 441.6h2M27 443.6h2M30 443.6h2M17 447.6h4M17 449.6h6M29 449.6h5M17 451.6h8M25 455.6h4M35 455.6h2M38 455.6h2M25 457.6h7M38 457.6h6M45 457.6h6M52 457.6h2M55 457.6h5M61 457.6h5M17 463.6h4M31 471.6h1M44 471.6h2M47 471.6h2M61 471.6h3M65 471.6h2M71 471.6h3M75 471.6h2M13 477.6h4M13 479.6h6M25 479.6h7M13 481.6h8M13 483.6h4M34 495.6h5M55 495.6h5M48 497.6h3M52 497.6h2M58 497.6h3M62 497.6h2M75 497.6h5M99 497.6h4M10 499.6h1M15 499.6h4M17 503.6h4M17 505.6h6M29 505.6h5M17 507.6h8M25 511.6h4M25 513.6h7M38 513.6h3M42 513.6h2M45 513.6h5M51 513.6h8M60 513.6h4M65 513.6h6M17 519.6h4M27 527.6h4M17 531.6h4M17 533.6h6M29 533.6h5M17 535.6h8M25 539.6h4M35 539.6h4M25 541.6h7M38 541.6h6M45 541.6h6M52 541.6h2M55 541.6h5M61 541.6h5M17 547.6h4M27 555.6h2M30 555.6h2M17 559.6h4M17 561.6h6M29 561.6h5M17 563.6h8M25 567.6h4M35 567.6h2M38 567.6h2M25 569.6h7M38 569.6h6M45 569.6h6M52 569.6h2M55 569.6h5M61 569.6h5M17 575.6h4M32 583.6h3M36 583.6h2M42 583.6h3M46 583.6h2M59 583.6h4M13 587.6h4M13 589.6h6M25 589.6h7M13 591.6h8M13 593.6h4M34 607.6h5M55 607.6h5M48 609.6h3M52 609.6h2M58 609.6h3M62 609.6h2M75 609.6h5M99 609.6h4M10 611.6h1M15 611.6h4M17 615.6h4M17 617.6h6M29 617.6h5" stroke="#a31515" stroke-width="1.100" opacity="0.7" fill="none"/><path d="M26 57.6h1M26 113.6h1M26 169.6h1M26 197.6h1M26 227.6h1M26 283.6h1M26 311.6h1M26 331.6h1M26 349.6h1M26 415.6h1M26 447.6h1M26 503.6h1M26 531.6h1M26 559.6h1M26 615.6h1" stroke="#098658" stroke-width="1.100" opacity="0.75" fill="none"/><path d="M25 5.6h6M33 5.6h2M20 9.6h7M31 15.6h2M35 15.6h5M8 21.6h4M13 23.6h3M12 25.6h8M12 27.6h2M15 27.6h2M12 29.6h6M12 31.6h7M6 37.6h8M23 37.6h6M31 37.6h2M35 51.6h4M16 81.6h7M35 107.6h4M16 137.6h7M35 163.6h4M17 221.6h3M16 251.6h7M35 277.6h4M18 327.6h6M16 373.6h7M35 409.6h4M16 441.6h2M19 441.6h2M16 471.6h2M19 471.6h2M35 497.6h4M16 583.6h7M35 609.6h4" stroke="#267f99" stroke-width="1.100" opacity="0.7" fill="none"/><path d="M10 1.6h3M13.25 1.6h0.5M14 1.6h4M18.25 1.6h0.5M19 1.6h6M25.25 1.6h0.5M26.25 1.6h0.5M27 1.6h3M30.25 1.6h0.5M31 1.6h2M33.25 1.6h0.5M34.25 1.6h0.5M4 5.6h3M7.25 5.6h0.5M8 5.6h4M12.25 5.6h0.5M13 5.6h6M19.25 5.6h0.5M20.25 5.6h0.5M21 5.6h3M24.25 5.6h0.5M31.25 5.6h0.5M32.25 5.6h0.5M35.25 5.6h0.5M4.25 9.6h0.5M5.25 9.6h0.5M6.25 9.6h0.5M7 9.6h2M9.25 9.6h0.5M10 9.6h4M14.25 9.6h0.5M15 9.6h4M19.25 9.6h0.5M27.25 9.6h0.5M4.25 13.6h0.5M5.25 13.6h0.5M6.25 13.6h0.5M7 13.6h2M9.25 13.6h0.5M10 13.6h4M14.25 13.6h0.5M15 13.6h4M19.25 13.6h0.5M20 13.6h2M22.25 13.6h0.5M23.25 13.6h0.5M4.25 15.6h0.5M5.25 15.6h0.5M6.25 15.6h0.5M7 15.6h2M9.25 15.6h0.5M10 15.6h4M14.25 15.6h0.5M15 15.6h7M22.25 15.6h0.5M23 15.6h7M30.25 15.6h0.5M33.25 15.6h0.5M34.25 15.6h0.5M40.25 15.6h0.5M41 15.6h2M43.25 15.6h0.5M44.25 15.6h0.5M4 17.6h2M6.25 17.6h0.5M4 21.6h3M7.25 21.6h0.5M12.25 21.6h0.5M4 23.6h3M7.25 23.6h0.5M8 23.6h2M10.25 23.6h0.5M11.25 23.6h0.5M12.25 23.6h0.5M16.25 23.6h0.5M4 25.6h3M7.25 25.6h0.5M8 25.6h2M10.25 25.6h0.5M11.25 25.6h0.5M20.25 25.6h0.5M4 27.6h3M7.25 27.6h0.5M8 27.6h2M10.25 27.6h0.5M11.25 27.6h0.5M14.25 27.6h0.5M17.25 27.6h0.5M4 29.6h3M7.25 29.6h0.5M8 29.6h2M10.25 29.6h0.5M11.25 29.6h0.5M18.25 29.6h0.5M4 31.6h3M7.25 31.6h0.5M8 31.6h2M10.25 31.6h0.5M11.25 31.6h0.5M19.25 31.6h0.5M1.25 37.6h0.5M29.25 37.6h0.5M30.25 37.6h0.5M0.25 39.6h0.5M7.25 43.6h0.5M8.25 43.6h0.5M16.25 43.6h0.5M20 43.6h5M25.25 43.6h0.5M26.25 43.6h0.5M27.25 43.6h0.5M4.25 45.6h0.5M17 47.6h1M25.25 47.6h0.5M33.25 47.6h0.5M41.25 47.6h0.5M42.25 47.6h0.5M43.25 47.6h0.5M15 49.6h1M17.25 49.6h0.5M23.25 49.6h0.5M32.25 49.6h0.5M33.25 49.6h0.5M39.25 49.6h0.5M40.25 49.6h0.5M41.25 49.6h0.5M43 49.6h1M53.25 49.6h0.5M54.25 49.6h0.5M60.25 49.6h0.5M61.25 49.6h0.5M63.25 49.6h0.5M65.25 49.6h0.5M66.25 49.6h0.5M67.25 49.6h0.5M8.25 51.6h0.5M11.25 51.6h0.5M17.25 51.6h0.5M24.25 51.6h0.5M26 51.6h2M34.25 51.6h0.5M39.25 51.6h0.5M40.25 51.6h0.5M46.25 51.6h0.5M47.25 51.6h0.5M51.25 51.6h0.5M54.25 51.6h0.5M55.25 51.6h0.5M57.25 51.6h0.5M61.25 51.6h0.5M64.25 51.6h0.5M65.25 51.6h0.5M66.25 51.6h0.5M67 51.6h1M73.25 51.6h0.5M74.25 51.6h0.5M80.25 51.6h0.5M81.25 51.6h0.5M89.25 51.6h0.5M90.25 51.6h0.5M91 51.6h1M97.25 51.6h0.5M98.25 51.6h0.5M103.25 51.6h0.5M104.25 51.6h0.5M8.25 53.6h0.5M9.25 53.6h0.5M11.25 53.6h0.5M12.25 53.6h0.5M14.25 53.6h0.5M19.25 53.6h0.5M20.25 53.6h0.5M21.25 53.6h0.5M22 53.6h1M24.25 53.6h0.5M28.25 53.6h0.5M29.25 53.6h0.5M30.25 53.6h0.5M31.25 53.6h0.5M33.25 53.6h0.5M19.25 55.6h0.5M16.25 57.6h0.5M21.25 57.6h0.5M23 57.6h1M24 57.6h1M27.25 57.6h0.5M16.25 59.6h0.5M23.25 59.6h0.5M25 59.6h1M26 59.6h1M28.25 59.6h0.5M34.25 59.6h0.5M35.25 59.6h0.5M16.25 61.6h0.5M25.25 61.6h0.5M27 61.6h1M28 61.6h1M30.25 61.6h0.5M20.25 63.6h0.5M24.25 65.6h0.5M29.25 65.6h0.5M31 65.6h1M32 65.6h1M34.25 65.6h0.5M35.25 65.6h0.5M36.25 65.6h0.5M24.25 67.6h0.5M32.25 67.6h0.5M34 67.6h1M35 67.6h1M37.25 67.6h0.5M71.25 67.6h0.5M72.25 67.6h0.5M20.25 69.6h0.5M16.25 71.6h0.5M17.25 71.6h0.5M16.25 73.6h0.5M21.25 73.6h0.5M23 73.6h1M24 73.6h1M26.25 73.6h0.5M27.25 73.6h0.5M12.25 75.6h0.5M13.25 75.6h0.5M8.25 77.6h0.5M14 81.6h1M23.25 81.6h0.5M24.25 81.6h0.5M30.25 81.6h0.5M31.25 81.6h0.5M35.25 81.6h0.5M38.25 81.6h0.5M39.25 81.6h0.5M41.25 81.6h0.5M45.25 81.6h0.5M48.25 81.6h0.5M49.25 81.6h0.5M50.25 81.6h0.5M51 81.6h1M57.25 81.6h0.5M58.25 81.6h0.5M63.25 81.6h0.5M64.25 81.6h0.5M71.25 81.6h0.5M72.25 81.6h0.5M73 81.6h1M77.25 81.6h0.5M78.25 81.6h0.5M79.25 81.6h0.5M15.25 83.6h0.5M12.25 85.6h0.5M17.25 85.6h0.5M19 85.6h1M20 85.6h1M22.25 85.6h0.5M23.25 85.6h0.5M12.25 87.6h0.5M19.25 87.6h0.5M21 87.6h1M22 87.6h1M24.25 87.6h0.5M32.25 87.6h0.5M33.25 87.6h0.5M12.25 89.6h0.5M21.25 89.6h0.5M23 89.6h1M24 89.6h1M26.25 89.6h0.5M27.25 89.6h0.5M28.25 89.6h0.5M12.25 91.6h0.5M17.25 91.6h0.5M19 91.6h1M20 91.6h1M8.25 93.6h0.5M9.25 93.6h0.5M4.25 95.6h0.5M7.25 99.6h0.5M8.25 99.6h0.5M16.25 99.6h0.5M20 99.6h6M26.25 99.6h0.5M27.25 99.6h0.5M4.25 101.6h0.5M17 103.6h1M25.25 103.6h0.5M33.25 103.6h0.5M41.25 103.6h0.5M42.25 103.6h0.5M43.25 103.6h0.5M15 105.6h1M17.25 105.6h0.5M23.25 105.6h0.5M32.25 105.6h0.5M33.25 105.6h0.5M39.25 105.6h0.5M40.25 105.6h0.5M41.25 105.6h0.5M43 105.6h1M53.25 105.6h0.5M54.25 105.6h0.5M60.25 105.6h0.5M61.25 105.6h0.5M63.25 105.6h0.5M65.25 105.6h0.5M66.25 105.6h0.5M67.25 105.6h0.5M8.25 107.6h0.5M11.25 107.6h0.5M17.25 107.6h0.5M24.25 107.6h0.5M26 107.6h2M34.25 107.6h0.5M39.25 107.6h0.5M40.25 107.6h0.5M46.25 107.6h0.5M47.25 107.6h0.5M51.25 107.6h0.5M54.25 107.6h0.5M55.25 107.6h0.5M57.25 107.6h0.5M61.25 107.6h0.5M64.25 107.6h0.5M65.25 107.6h0.5M66.25 107.6h0.5M67 107.6h1M73.25 107.6h0.5M74.25 107.6h0.5M80.25 107.6h0.5M81.25 107.6h0.5M89.25 107.6h0.5M90.25 107.6h0.5M91 107.6h1M97.25 107.6h0.5M98.25 107.6h0.5M103.25 107.6h0.5M104.25 107.6h0.5M8.25 109.6h0.5M9.25 109.6h0.5M11.25 109.6h0.5M12.25 109.6h0.5M14.25 109.6h0.5M19.25 109.6h0.5M20.25 109.6h0.5M21.25 109.6h0.5M22 109.6h1M24.25 109.6h0.5M28.25 109.6h0.5M29.25 109.6h0.5M30.25 109.6h0.5M31.25 109.6h0.5M33.25 109.6h0.5M19.25 111.6h0.5M16.25 113.6h0.5M21.25 113.6h0.5M23 113.6h1M24 113.6h1M27.25 113.6h0.5M16.25 115.6h0.5M23.25 115.6h0.5M25 115.6h1M26 115.6h1M28.25 115.6h0.5M34.25 115.6h0.5M35.25 115.6h0.5M16.25 117.6h0.5M25.25 117.6h0.5M27 117.6h1M28 117.6h1M30.25 117.6h0.5M20.25 119.6h0.5M24.25 121.6h0.5M29.25 121.6h0.5M31 121.6h1M32 121.6h1M34.25 121.6h0.5M35.25 121.6h0.5M36.25 121.6h0.5M24.25 123.6h0.5M32.25 123.6h0.5M34 123.6h1M35 123.6h1M37.25 123.6h0.5M71.25 123.6h0.5M72.25 123.6h0.5M20.25 125.6h0.5M16.25 127.6h0.5M17.25 127.6h0.5M16.25 129.6h0.5M21.25 129.6h0.5M23 129.6h1M24 129.6h1M26.25 129.6h0.5M27.25 129.6h0.5M12.25 131.6h0.5M13.25 131.6h0.5M8.25 133.6h0.5M14 137.6h1M23.25 137.6h0.5M24.25 137.6h0.5M30.25 137.6h0.5M31.25 137.6h0.5M35.25 137.6h0.5M38.25 137.6h0.5M39.25 137.6h0.5M41.25 137.6h0.5M45.25 137.6h0.5M48.25 137.6h0.5M49.25 137.6h0.5M50.25 137.6h0.5M51 137.6h1M57.25 137.6h0.5M58.25 137.6h0.5M63.25 137.6h0.5M64.25 137.6h0.5M71.25 137.6h0.5M72.25 137.6h0.5M73 137.6h1M77.25 137.6h0.5M78.25 137.6h0.5M79.25 137.6h0.5M15.25 139.6h0.5M12.25 141.6h0.5M17.25 141.6h0.5M19 141.6h1M20 141.6h1M22.25 141.6h0.5M23.25 141.6h0.5M12.25 143.6h0.5M19.25 143.6h0.5M21 143.6h1M22 143.6h1M24.25 143.6h0.5M32.25 143.6h0.5M33.25 143.6h0.5M12.25 145.6h0.5M21.25 145.6h0.5M23 145.6h1M24 145.6h1M26.25 145.6h0.5M27.25 145.6h0.5M28.25 145.6h0.5M12.25 147.6h0.5M17.25 147.6h0.5M19 147.6h1M20 147.6h1M8.25 149.6h0.5M9.25 149.6h0.5M4.25 151.6h0.5M7.25 155.6h0.5M8.25 155.6h0.5M16.25 155.6h0.5M25.25 155.6h0.5M26.25 155.6h0.5M4.25 157.6h0.5M17 159.6h1M25.25 159.6h0.5M33.25 159.6h0.5M41.25 159.6h0.5M42.25 159.6h0.5M43.25 159.6h0.5M15 161.6h1M17.25 161.6h0.5M23.25 161.6h0.5M32.25 161.6h0.5M33.25 161.6h0.5M39.25 161.6h0.5M40.25 161.6h0.5M41.25 161.6h0.5M43 161.6h1M53.25 161.6h0.5M54.25 161.6h0.5M60.25 161.6h0.5M61.25 161.6h0.5M63.25 161.6h0.5M65.25 161.6h0.5M66.25 161.6h0.5M67.25 161.6h0.5M8.25 163.6h0.5M11.25 163.6h0.5M17.25 163.6h0.5M24.25 163.6h0.5M26 163.6h2M34.25 163.6h0.5M39.25 163.6h0.5M40.25 163.6h0.5M46.25 163.6h0.5M47.25 163.6h0.5M51.25 163.6h0.5M54.25 163.6h0.5M55.25 163.6h0.5M57.25 163.6h0.5M61.25 163.6h0.5M64.25 163.6h0.5M65.25 163.6h0.5M66.25 163.6h0.5M67 163.6h1M73.25 163.6h0.5M74.25 163.6h0.5M80.25 163.6h0.5M81.25 163.6h0.5M89.25 163.6h0.5M90.25 163.6h0.5M91 163.6h1M97.25 163.6h0.5M98.25 163.6h0.5M103.25 163.6h0.5M104.25 163.6h0.5M8.25 165.6h0.5M9.25 165.6h0.5M11.25 165.6h0.5M12.25 165.6h0.5M14.25 165.6h0.5M19.25 165.6h0.5M20.25 165.6h0.5M21.25 165.6h0.5M22 165.6h1M24.25 165.6h0.5M28.25 165.6h0.5M29.25 165.6h0.5M30.25 165.6h0.5M31.25 165.6h0.5M33.25 165.6h0.5M19.25 167.6h0.5M16.25 169.6h0.5M21.25 169.6h0.5M23 169.6h1M24 169.6h1M27.25 169.6h0.5M16.25 171.6h0.5M23.25 171.6h0.5M25 171.6h1M26 171.6h1M28.25 171.6h0.5M34.25 171.6h0.5M35.25 171.6h0.5M16.25 173.6h0.5M25.25 173.6h0.5M27 173.6h1M28 173.6h1M30.25 173.6h0.5M20.25 175.6h0.5M24.25 177.6h0.5M29.25 177.6h0.5M31 177.6h1M32 177.6h1M34.25 177.6h0.5M35.25 177.6h0.5M36.25 177.6h0.5M24.25 179.6h0.5M32.25 179.6h0.5M34 179.6h1M35 179.6h1M37.25 179.6h0.5M71.25 179.6h0.5M72.25 179.6h0.5M20.25 181.6h0.5M16.25 183.6h0.5M17.25 183.6h0.5M16.25 185.6h0.5M21.25 185.6h0.5M23 185.6h1M24 185.6h1M26.25 185.6h0.5M27.25 185.6h0.5M12.25 187.6h0.5M13.25 187.6h0.5M8.25 189.6h0.5M8.25 193.6h0.5M11.25 193.6h0.5M17.25 193.6h0.5M25.25 193.6h0.5M26.25 193.6h0.5M31.25 193.6h0.5M32.25 193.6h0.5M33.25 193.6h0.5M34.25 193.6h0.5M36.25 193.6h0.5M19.25 195.6h0.5M16.25 197.6h0.5M21.25 197.6h0.5M23 197.6h1M24 197.6h1M27.25 197.6h0.5M16.25 199.6h0.5M23.25 199.6h0.5M25 199.6h1M26 199.6h1M28.25 199.6h0.5M34.25 199.6h0.5M35.25 199.6h0.5M16.25 201.6h0.5M25.25 201.6h0.5M27 201.6h1M28 201.6h1M30.25 201.6h0.5M20.25 203.6h0.5M24.25 205.6h0.5M29.25 205.6h0.5M31 205.6h1M32 205.6h1M34.25 205.6h0.5M39.25 205.6h0.5M40.25 205.6h0.5M24.25 207.6h0.5M32.25 207.6h0.5M34 207.6h1M35 207.6h1M37.25 207.6h0.5M66.25 207.6h0.5M67.25 207.6h0.5M20.25 209.6h0.5M16.25 211.6h0.5M17.25 211.6h0.5M16.25 213.6h0.5M21.25 213.6h0.5M23 213.6h1M24 213.6h1M26.25 213.6h0.5M27.25 213.6h0.5M12.25 215.6h0.5M13.25 215.6h0.5M8.25 217.6h0.5M9.25 221.6h0.5M14 221.6h1M16.25 221.6h0.5M20.25 221.6h0.5M21.25 221.6h0.5M27.25 221.6h0.5M28.25 221.6h0.5M33.25 221.6h0.5M34.25 221.6h0.5M43.25 221.6h0.5M44.25 221.6h0.5M49.25 221.6h0.5M50.25 221.6h0.5M51.25 221.6h0.5M52.25 221.6h0.5M53 221.6h1M55.25 221.6h0.5M59.25 221.6h0.5M60.25 221.6h0.5M61.25 221.6h0.5M8.25 223.6h0.5M11.25 223.6h0.5M17.25 223.6h0.5M25.25 223.6h0.5M26.25 223.6h0.5M27.25 223.6h0.5M31.25 223.6h0.5M32.25 223.6h0.5M33.25 223.6h0.5M34.25 223.6h0.5M36.25 223.6h0.5M19.25 225.6h0.5M16.25 227.6h0.5M21.25 227.6h0.5M23 227.6h1M24 227.6h1M27.25 227.6h0.5M16.25 229.6h0.5M23.25 229.6h0.5M25 229.6h1M26 229.6h1M28.25 229.6h0.5M34.25 229.6h0.5M35.25 229.6h0.5M16.25 231.6h0.5M25.25 231.6h0.5M27 231.6h1M28 231.6h1M30.25 231.6h0.5M20.25 233.6h0.5M24.25 235.6h0.5M29.25 235.6h0.5M31 235.6h1M32 235.6h1M34.25 235.6h0.5M35.25 235.6h0.5M39.25 235.6h0.5M40.25 235.6h0.5M24.25 237.6h0.5M32.25 237.6h0.5M34 237.6h1M35 237.6h1M37.25 237.6h0.5M66.25 237.6h0.5M67.25 237.6h0.5M20.25 239.6h0.5M16.25 241.6h0.5M17.25 241.6h0.5M16.25 243.6h0.5M21.25 243.6h0.5M23 243.6h1M24 243.6h1M26.25 243.6h0.5M27.25 243.6h0.5M12.25 245.6h0.5M13.25 245.6h0.5M8.25 247.6h0.5M14 251.6h1M23.25 251.6h0.5M24.25 251.6h0.5M30.25 251.6h0.5M31.25 251.6h0.5M35.25 251.6h0.5M38.25 251.6h0.5M39.25 251.6h0.5M41.25 251.6h0.5M45.25 251.6h0.5M48.25 251.6h0.5M49.25 251.6h0.5M50.25 251.6h0.5M51 251.6h1M57.25 251.6h0.5M58.25 251.6h0.5M63.25 251.6h0.5M64.25 251.6h0.5M71.25 251.6h0.5M72.25 251.6h0.5M73 251.6h1M79.25 251.6h0.5M80.25 251.6h0.5M85.25 251.6h0.5M86.25 251.6h0.5M93.25 251.6h0.5M94.25 251.6h0.5M95 251.6h1M99.25 251.6h0.5M100.25 251.6h0.5M101.25 251.6h0.5M15.25 253.6h0.5M12.25 255.6h0.5M17.25 255.6h0.5M19 255.6h1M20 255.6h1M22.25 255.6h0.5M23.25 255.6h0.5M12.25 257.6h0.5M19.25 257.6h0.5M21 257.6h1M22 257.6h1M24.25 257.6h0.5M32.25 257.6h0.5M33.25 257.6h0.5M12.25 259.6h0.5M21.25 259.6h0.5M23 259.6h1M24 259.6h1M26.25 259.6h0.5M27.25 259.6h0.5M28.25 259.6h0.5M12.25 261.6h0.5M17.25 261.6h0.5M19 261.6h1M20 261.6h1M8.25 263.6h0.5M9.25 263.6h0.5M4.25 265.6h0.5M7.25 269.6h0.5M8.25 269.6h0.5M16.25 269.6h0.5M20.25 269.6h0.5M25.25 269.6h0.5M26.25 269.6h0.5M4.25 271.6h0.5M17 273.6h1M25.25 273.6h0.5M33.25 273.6h0.5M41.25 273.6h0.5M42.25 273.6h0.5M43.25 273.6h0.5M15 275.6h1M17.25 275.6h0.5M23.25 275.6h0.5M32.25 275.6h0.5M33.25 275.6h0.5M39.25 275.6h0.5M40.25 275.6h0.5M41.25 275.6h0.5M43 275.6h1M53.25 275.6h0.5M54.25 275.6h0.5M60.25 275.6h0.5M61.25 275.6h0.5M63.25 275.6h0.5M65.25 275.6h0.5M66.25 275.6h0.5M67.25 275.6h0.5M8.25 277.6h0.5M11.25 277.6h0.5M17.25 277.6h0.5M24.25 277.6h0.5M26 277.6h2M34.25 277.6h0.5M39.25 277.6h0.5M40.25 277.6h0.5M46.25 277.6h0.5M47.25 277.6h0.5M51.25 277.6h0.5M54.25 277.6h0.5M55.25 277.6h0.5M57.25 277.6h0.5M61.25 277.6h0.5M64.25 277.6h0.5M65.25 277.6h0.5M66.25 277.6h0.5M67 277.6h1M73.25 277.6h0.5M74.25 277.6h0.5M80.25 277.6h0.5M81.25 277.6h0.5M89.25 277.6h0.5M90.25 277.6h0.5M91 277.6h1M97.25 277.6h0.5M98.25 277.6h0.5M103.25 277.6h0.5M104.25 277.6h0.5M8.25 279.6h0.5M9.25 279.6h0.5M11.25 279.6h0.5M12.25 279.6h0.5M14.25 279.6h0.5M19.25 279.6h0.5M20.25 279.6h0.5M21.25 279.6h0.5M22 279.6h1M24.25 279.6h0.5M28.25 279.6h0.5M29.25 279.6h0.5M30.25 279.6h0.5M31.25 279.6h0.5M33.25 279.6h0.5M19.25 281.6h0.5M16.25 283.6h0.5M21.25 283.6h0.5M23 283.6h1M24 283.6h1M27.25 283.6h0.5M16.25 285.6h0.5M23.25 285.6h0.5M25 285.6h1M26 285.6h1M28.25 285.6h0.5M34.25 285.6h0.5M35.25 285.6h0.5M16.25 287.6h0.5M25.25 287.6h0.5M27 287.6h1M28 287.6h1M30.25 287.6h0.5M20.25 289.6h0.5M24.25 291.6h0.5M29.25 291.6h0.5M31 291.6h1M32 291.6h1M34.25 291.6h0.5M35.25 291.6h0.5M36.25 291.6h0.5M24.25 293.6h0.5M32.25 293.6h0.5M34 293.6h1M35 293.6h1M37.25 293.6h0.5M71.25 293.6h0.5M72.25 293.6h0.5M20.25 295.6h0.5M16.25 297.6h0.5M17.25 297.6h0.5M16.25 299.6h0.5M21.25 299.6h0.5M23 299.6h1M24 299.6h1M26.25 299.6h0.5M27.25 299.6h0.5M12.25 301.6h0.5M13.25 301.6h0.5M8.25 303.6h0.5M8.25 307.6h0.5M11.25 307.6h0.5M17.25 307.6h0.5M25.25 307.6h0.5M26.25 307.6h0.5M33.25 307.6h0.5M34.25 307.6h0.5M35.25 307.6h0.5M36.25 307.6h0.5M38.25 307.6h0.5M19.25 309.6h0.5M16.25 311.6h0.5M21.25 311.6h0.5M23 311.6h1M24 311.6h1M27.25 311.6h0.5M16.25 313.6h0.5M23.25 313.6h0.5M25 313.6h1M26 313.6h1M28.25 313.6h0.5M34.25 313.6h0.5M35.25 313.6h0.5M16.25 315.6h0.5M25.25 315.6h0.5M27 315.6h1M28 315.6h1M30.25 315.6h0.5M31.25 315.6h0.5M32.25 315.6h0.5M37.25 315.6h0.5M39 315.6h1M40 315.6h1M42.25 315.6h0.5M43.25 315.6h0.5M45.25 315.6h0.5M46.25 315.6h0.5M48.25 315.6h0.5M56.25 315.6h0.5M58 315.6h1M59 315.6h1M61.25 315.6h0.5M70.25 315.6h0.5M71.25 315.6h0.5M72.25 315.6h0.5M73.25 315.6h0.5M16.25 317.6h0.5M21.25 317.6h0.5M23 317.6h1M24 317.6h1M26.25 317.6h0.5M27.25 317.6h0.5M12.25 319.6h0.5M13.25 319.6h0.5M8.25 321.6h0.5M8.25 327.6h0.5M11.25 327.6h0.5M17.25 327.6h0.5M24.25 327.6h0.5M25.25 327.6h0.5M31.25 327.6h0.5M32.25 327.6h0.5M33.25 327.6h0.5M35.25 327.6h0.5M36.25 327.6h0.5M45.25 327.6h0.5M46.25 327.6h0.5M53.25 327.6h0.5M54.25 327.6h0.5M55.25 327.6h0.5M56.25 327.6h0.5M57 327.6h1M63.25 327.6h0.5M64.25 327.6h0.5M68.25 327.6h0.5M71.25 327.6h0.5M72.25 327.6h0.5M74.25 327.6h0.5M78.25 327.6h0.5M81.25 327.6h0.5M82.25 327.6h0.5M83.25 327.6h0.5M84 327.6h1M86.25 327.6h0.5M90.25 327.6h0.5M91.25 327.6h0.5M92.25 327.6h0.5M93.25 327.6h0.5M95.25 327.6h0.5M19.25 329.6h0.5M16.25 331.6h0.5M21.25 331.6h0.5M23 331.6h1M24 331.6h1M27.25 331.6h0.5M16.25 333.6h0.5M23.25 333.6h0.5M25 333.6h1M26 333.6h1M28.25 333.6h0.5M34.25 333.6h0.5M35.25 333.6h0.5M16.25 335.6h0.5M25.25 335.6h0.5M27 335.6h1M28 335.6h1M30.25 335.6h0.5M31.25 335.6h0.5M32.25 335.6h0.5M37.25 335.6h0.5M39 335.6h1M40 335.6h1M42.25 335.6h0.5M43.25 335.6h0.5M45.25 335.6h0.5M46.25 335.6h0.5M48.25 335.6h0.5M56.25 335.6h0.5M58 335.6h1M59 335.6h1M61.25 335.6h0.5M70.25 335.6h0.5M71.25 335.6h0.5M72.25 335.6h0.5M73.25 335.6h0.5M16.25 337.6h0.5M21.25 337.6h0.5M23 337.6h1M24 337.6h1M26.25 337.6h0.5M27.25 337.6h0.5M12.25 339.6h0.5M13.25 339.6h0.5M8.25 341.6h0.5M8.25 345.6h0.5M11.25 345.6h0.5M17.25 345.6h0.5M25.25 345.6h0.5M26.25 345.6h0.5M35.25 345.6h0.5M36.25 345.6h0.5M37.25 345.6h0.5M38.25 345.6h0.5M40.25 345.6h0.5M19.25 347.6h0.5M16.25 349.6h0.5M21.25 349.6h0.5M23 349.6h1M24 349.6h1M27.25 349.6h0.5M16.25 351.6h0.5M23.25 351.6h0.5M25 351.6h1M26 351.6h1M28.25 351.6h0.5M34.25 351.6h0.5M35.25 351.6h0.5M16.25 353.6h0.5M25.25 353.6h0.5M27 353.6h1M28 353.6h1M30.25 353.6h0.5M20.25 355.6h0.5M24.25 357.6h0.5M29.25 357.6h0.5M31 357.6h1M32 357.6h1M34.25 357.6h0.5M43.25 357.6h0.5M44.25 357.6h0.5M24.25 359.6h0.5M32.25 359.6h0.5M34 359.6h1M35 359.6h1M37.25 359.6h0.5M66.25 359.6h0.5M67.25 359.6h0.5M20.25 361.6h0.5M16.25 363.6h0.5M17.25 363.6h0.5M14 365.6h1M16.25 365.6h0.5M17.25 365.6h0.5M18.25 365.6h0.5M14 367.6h1M23.25 367.6h0.5M24.25 367.6h0.5M29.25 367.6h0.5M30.25 367.6h0.5M31.25 367.6h0.5M13 369.6h1M22.25 369.6h0.5M23.25 369.6h0.5M32.25 369.6h0.5M33.25 369.6h0.5M34.25 369.6h0.5M14 373.6h1M23.25 373.6h0.5M24.25 373.6h0.5M30.25 373.6h0.5M31.25 373.6h0.5M35.25 373.6h0.5M38.25 373.6h0.5M39.25 373.6h0.5M41.25 373.6h0.5M45.25 373.6h0.5M48.25 373.6h0.5M49.25 373.6h0.5M50.25 373.6h0.5M51 373.6h1M57.25 373.6h0.5M58.25 373.6h0.5M65.25 373.6h0.5M66.25 373.6h0.5M75.25 373.6h0.5M76.25 373.6h0.5M83.25 373.6h0.5M84.25 373.6h0.5M85.25 373.6h0.5M86.25 373.6h0.5M87 373.6h1M93.25 373.6h0.5M94.25 373.6h0.5M103.25 373.6h0.5M104.25 373.6h0.5M110.25 373.6h0.5M111.25 373.6h0.5M112 373.6h1M116.25 373.6h0.5M117.25 373.6h0.5M118.25 373.6h0.5M15.25 377.6h0.5M12.25 379.6h0.5M17.25 379.6h0.5M19 379.6h1M20 379.6h1M22.25 379.6h0.5M23.25 379.6h0.5M12.25 381.6h0.5M19.25 381.6h0.5M21 381.6h1M22 381.6h1M24.25 381.6h0.5M32.25 381.6h0.5M33.25 381.6h0.5M12.25 383.6h0.5M21.25 383.6h0.5M23 383.6h1M24 383.6h1M26.25 383.6h0.5M27.25 383.6h0.5M28.25 383.6h0.5M12.25 385.6h0.5M17.25 385.6h0.5M19 385.6h1M20 385.6h1M8.25 387.6h0.5M9.25 387.6h0.5M4.25 389.6h0.5M7.25 393.6h0.5M8.25 393.6h0.5M16.25 393.6h0.5M27.25 393.6h0.5M28.25 393.6h0.5M4.25 395.6h0.5M4.25 397.6h0.5M7.25 401.6h0.5M8.25 401.6h0.5M16.25 401.6h0.5M22.25 401.6h0.5M26.25 401.6h0.5M27.25 401.6h0.5M4.25 403.6h0.5M17 405.6h1M25.25 405.6h0.5M33.25 405.6h0.5M41.25 405.6h0.5M42.25 405.6h0.5M43.25 405.6h0.5M15 407.6h1M17.25 407.6h0.5M23.25 407.6h0.5M32.25 407.6h0.5M33.25 407.6h0.5M39.25 407.6h0.5M40.25 407.6h0.5M41.25 407.6h0.5M43 407.6h1M53.25 407.6h0.5M54.25 407.6h0.5M60.25 407.6h0.5M61.25 407.6h0.5M63.25 407.6h0.5M65.25 407.6h0.5M66.25 407.6h0.5M67.25 407.6h0.5M8.25 409.6h0.5M11.25 409.6h0.5M17.25 409.6h0.5M24.25 409.6h0.5M26 409.6h2M34.25 409.6h0.5M39.25 409.6h0.5M40.25 409.6h0.5M46.25 409.6h0.5M47.25 409.6h0.5M51.25 409.6h0.5M54.25 409.6h0.5M55.25 409.6h0.5M57.25 409.6h0.5M61.25 409.6h0.5M64.25 409.6h0.5M65.25 409.6h0.5M66.25 409.6h0.5M67 409.6h1M73.25 409.6h0.5M74.25 409.6h0.5M80.25 409.6h0.5M81.25 409.6h0.5M89.25 409.6h0.5M90.25 409.6h0.5M91 409.6h1M97.25 409.6h0.5M98.25 409.6h0.5M103.25 409.6h0.5M104.25 409.6h0.5M8.25 411.6h0.5M9.25 411.6h0.5M11.25 411.6h0.5M12.25 411.6h0.5M14.25 411.6h0.5M19.25 411.6h0.5M20.25 411.6h0.5M21.25 411.6h0.5M22 411.6h1M24.25 411.6h0.5M28.25 411.6h0.5M29.25 411.6h0.5M30.25 411.6h0.5M31.25 411.6h0.5M33.25 411.6h0.5M19.25 413.6h0.5M16.25 415.6h0.5M21.25 415.6h0.5M23 415.6h1M24 415.6h1M27.25 415.6h0.5M16.25 417.6h0.5M23.25 417.6h0.5M25 417.6h1M26 417.6h1M28.25 417.6h0.5M34.25 417.6h0.5M35.25 417.6h0.5M16.25 419.6h0.5M25.25 419.6h0.5M27 419.6h1M28 419.6h1M30.25 419.6h0.5M20.25 421.6h0.5M24.25 423.6h0.5M29.25 423.6h0.5M31 423.6h1M32 423.6h1M34.25 423.6h0.5M35.25 423.6h0.5M36.25 423.6h0.5M24.25 425.6h0.5M32.25 425.6h0.5M34 425.6h1M35 425.6h1M37.25 425.6h0.5M71.25 425.6h0.5M72.25 425.6h0.5M20.25 427.6h0.5M16.25 429.6h0.5M17.25 429.6h0.5M16.25 431.6h0.5M21.25 431.6h0.5M23 431.6h1M24 431.6h1M26.25 431.6h0.5M27.25 431.6h0.5M12.25 433.6h0.5M13.25 433.6h0.5M8.25 435.6h0.5M14 441.6h1M18.25 441.6h0.5M21.25 441.6h0.5M22.25 441.6h0.5M28.25 441.6h0.5M29.25 441.6h0.5M33.25 441.6h0.5M36.25 441.6h0.5M37.25 441.6h0.5M39.25 441.6h0.5M43.25 441.6h0.5M46.25 441.6h0.5M47.25 441.6h0.5M48.25 441.6h0.5M49 441.6h1M53.25 441.6h0.5M54.25 441.6h0.5M55.25 441.6h0.5M8.25 443.6h0.5M11.25 443.6h0.5M17.25 443.6h0.5M25.25 443.6h0.5M26.25 443.6h0.5M29.25 443.6h0.5M32.25 443.6h0.5M33.25 443.6h0.5M34.25 443.6h0.5M35.25 443.6h0.5M37.25 443.6h0.5M19.25 445.6h0.5M16.25 447.6h0.5M21.25 447.6h0.5M23 447.6h1M24 447.6h1M27.25 447.6h0.5M16.25 449.6h0.5M23.25 449.6h0.5M25 449.6h1M26 449.6h1M28.25 449.6h0.5M34.25 449.6h0.5M35.25 449.6h0.5M16.25 451.6h0.5M25.25 451.6h0.5M27 451.6h1M28 451.6h1M30.25 451.6h0.5M20.25 453.6h0.5M24.25 455.6h0.5M29.25 455.6h0.5M31 455.6h1M32 455.6h1M34.25 455.6h0.5M37.25 455.6h0.5M40.25 455.6h0.5M41.25 455.6h0.5M24.25 457.6h0.5M32.25 457.6h0.5M34 457.6h1M35 457.6h1M37.25 457.6h0.5M66.25 457.6h0.5M67.25 457.6h0.5M20.25 459.6h0.5M16.25 461.6h0.5M17.25 461.6h0.5M16.25 463.6h0.5M21.25 463.6h0.5M23 463.6h1M24 463.6h1M26.25 463.6h0.5M27.25 463.6h0.5M12.25 465.6h0.5M13.25 465.6h0.5M8.25 467.6h0.5M14 471.6h1M18.25 471.6h0.5M21.25 471.6h0.5M22.25 471.6h0.5M28.25 471.6h0.5M29.25 471.6h0.5M30.25 471.6h0.5M32.25 471.6h0.5M33.25 471.6h0.5M42.25 471.6h0.5M43.25 471.6h0.5M46.25 471.6h0.5M49.25 471.6h0.5M50.25 471.6h0.5M51.25 471.6h0.5M52.25 471.6h0.5M53 471.6h1M59.25 471.6h0.5M60.25 471.6h0.5M64.25 471.6h0.5M67.25 471.6h0.5M68.25 471.6h0.5M70.25 471.6h0.5M74.25 471.6h0.5M77.25 471.6h0.5M78.25 471.6h0.5M79.25 471.6h0.5M80 471.6h1M82.25 471.6h0.5M86.25 471.6h0.5M87.25 471.6h0.5M88.25 471.6h0.5M15.25 475.6h0.5M12.25 477.6h0.5M17.25 477.6h0.5M19 477.6h1M20 477.6h1M22.25 477.6h0.5M23.25 477.6h0.5M12.25 479.6h0.5M19.25 479.6h0.5M21 479.6h1M22 479.6h1M24.25 479.6h0.5M32.25 479.6h0.5M33.25 479.6h0.5M12.25 481.6h0.5M21.25 481.6h0.5M23 481.6h1M24 481.6h1M26.25 481.6h0.5M27.25 481.6h0.5M28.25 481.6h0.5M12.25 483.6h0.5M17.25 483.6h0.5M19 483.6h1M20 483.6h1M8.25 485.6h0.5M9.25 485.6h0.5M4.25 487.6h0.5M7.25 489.6h0.5M8.25 489.6h0.5M16.25 489.6h0.5M25.25 489.6h0.5M26.25 489.6h0.5M4.25 491.6h0.5M17 493.6h1M25.25 493.6h0.5M33.25 493.6h0.5M41.25 493.6h0.5M42.25 493.6h0.5M43.25 493.6h0.5M15 495.6h1M17.25 495.6h0.5M23.25 495.6h0.5M32.25 495.6h0.5M33.25 495.6h0.5M39.25 495.6h0.5M40.25 495.6h0.5M41.25 495.6h0.5M43 495.6h1M53.25 495.6h0.5M54.25 495.6h0.5M60.25 495.6h0.5M61.25 495.6h0.5M63.25 495.6h0.5M65.25 495.6h0.5M66.25 495.6h0.5M67.25 495.6h0.5M8.25 497.6h0.5M11.25 497.6h0.5M17.25 497.6h0.5M24.25 497.6h0.5M26 497.6h2M34.25 497.6h0.5M39.25 497.6h0.5M40.25 497.6h0.5M46.25 497.6h0.5M47.25 497.6h0.5M51.25 497.6h0.5M54.25 497.6h0.5M55.25 497.6h0.5M57.25 497.6h0.5M61.25 497.6h0.5M64.25 497.6h0.5M65.25 497.6h0.5M66.25 497.6h0.5M67 497.6h1M73.25 497.6h0.5M74.25 497.6h0.5M80.25 497.6h0.5M81.25 497.6h0.5M89.25 497.6h0.5M90.25 497.6h0.5M91 497.6h1M97.25 497.6h0.5M98.25 497.6h0.5M103.25 497.6h0.5M104.25 497.6h0.5M8.25 499.6h0.5M9.25 499.6h0.5M11.25 499.6h0.5M12.25 499.6h0.5M14.25 499.6h0.5M19.25 499.6h0.5M20.25 499.6h0.5M21.25 499.6h0.5M22 499.6h1M24.25 499.6h0.5M28.25 499.6h0.5M29.25 499.6h0.5M30.25 499.6h0.5M31.25 499.6h0.5M33.25 499.6h0.5M19.25 501.6h0.5M16.25 503.6h0.5M21.25 503.6h0.5M23 503.6h1M24 503.6h1M27.25 503.6h0.5M16.25 505.6h0.5M23.25 505.6h0.5M25 505.6h1M26 505.6h1M28.25 505.6h0.5M34.25 505.6h0.5M35.25 505.6h0.5M16.25 507.6h0.5M25.25 507.6h0.5M27 507.6h1M28 507.6h1M30.25 507.6h0.5M20.25 509.6h0.5M24.25 511.6h0.5M29.25 511.6h0.5M31 511.6h1M32 511.6h1M34.25 511.6h0.5M35.25 511.6h0.5M36.25 511.6h0.5M24.25 513.6h0.5M32.25 513.6h0.5M34 513.6h1M35 513.6h1M37.25 513.6h0.5M71.25 513.6h0.5M72.25 513.6h0.5M20.25 515.6h0.5M16.25 517.6h0.5M17.25 517.6h0.5M16.25 519.6h0.5M21.25 519.6h0.5M23 519.6h1M24 519.6h1M26.25 519.6h0.5M27.25 519.6h0.5M12.25 521.6h0.5M13.25 521.6h0.5M8.25 523.6h0.5M8.25 527.6h0.5M11.25 527.6h0.5M17.25 527.6h0.5M25.25 527.6h0.5M26.25 527.6h0.5M31.25 527.6h0.5M32.25 527.6h0.5M33.25 527.6h0.5M34.25 527.6h0.5M36.25 527.6h0.5M19.25 529.6h0.5M16.25 531.6h0.5M21.25 531.6h0.5M23 531.6h1M24 531.6h1M27.25 531.6h0.5M16.25 533.6h0.5M23.25 533.6h0.5M25 533.6h1M26 533.6h1M28.25 533.6h0.5M34.25 533.6h0.5M35.25 533.6h0.5M16.25 535.6h0.5M25.25 535.6h0.5M27 535.6h1M28 535.6h1M30.25 535.6h0.5M20.25 537.6h0.5M24.25 539.6h0.5M29.25 539.6h0.5M31 539.6h1M32 539.6h1M34.25 539.6h0.5M39.25 539.6h0.5M40.25 539.6h0.5M24.25 541.6h0.5M32.25 541.6h0.5M34 541.6h1M35 541.6h1M37.25 541.6h0.5M66.25 541.6h0.5M67.25 541.6h0.5M20.25 543.6h0.5M16.25 545.6h0.5M17.25 545.6h0.5M16.25 547.6h0.5M21.25 547.6h0.5M23 547.6h1M24 547.6h1M26.25 547.6h0.5M27.25 547.6h0.5M12.25 549.6h0.5M13.25 549.6h0.5M8.25 551.6h0.5M8.25 555.6h0.5M11.25 555.6h0.5M17.25 555.6h0.5M25.25 555.6h0.5M26.25 555.6h0.5M29.25 555.6h0.5M32.25 555.6h0.5M33.25 555.6h0.5M34.25 555.6h0.5M35.25 555.6h0.5M37.25 555.6h0.5M19.25 557.6h0.5M16.25 559.6h0.5M21.25 559.6h0.5M23 559.6h1M24 559.6h1M27.25 559.6h0.5M16.25 561.6h0.5M23.25 561.6h0.5M25 561.6h1M26 561.6h1M28.25 561.6h0.5M34.25 561.6h0.5M35.25 561.6h0.5M16.25 563.6h0.5M25.25 563.6h0.5M27 563.6h1M28 563.6h1M30.25 563.6h0.5M20.25 565.6h0.5M24.25 567.6h0.5M29.25 567.6h0.5M31 567.6h1M32 567.6h1M34.25 567.6h0.5M37.25 567.6h0.5M40.25 567.6h0.5M41.25 567.6h0.5M24.25 569.6h0.5M32.25 569.6h0.5M34 569.6h1M35 569.6h1M37.25 569.6h0.5M66.25 569.6h0.5M67.25 569.6h0.5M20.25 571.6h0.5M16.25 573.6h0.5M17.25 573.6h0.5M16.25 575.6h0.5M21.25 575.6h0.5M23 575.6h1M24 575.6h1M26.25 575.6h0.5M27.25 575.6h0.5M12.25 577.6h0.5M13.25 577.6h0.5M8.25 579.6h0.5M14 583.6h1M23.25 583.6h0.5M24.25 583.6h0.5M30.25 583.6h0.5M31.25 583.6h0.5M35.25 583.6h0.5M38.25 583.6h0.5M39.25 583.6h0.5M41.25 583.6h0.5M45.25 583.6h0.5M48.25 583.6h0.5M49.25 583.6h0.5M50.25 583.6h0.5M51 583.6h1M57.25 583.6h0.5M58.25 583.6h0.5M63.25 583.6h0.5M64.25 583.6h0.5M71.25 583.6h0.5M72.25 583.6h0.5M73 583.6h1M77.25 583.6h0.5M78.25 583.6h0.5M79.25 583.6h0.5M15.25 585.6h0.5M12.25 587.6h0.5M17.25 587.6h0.5M19 587.6h1M20 587.6h1M22.25 587.6h0.5M23.25 587.6h0.5M12.25 589.6h0.5M19.25 589.6h0.5M21 589.6h1M22 589.6h1M24.25 589.6h0.5M32.25 589.6h0.5M33.25 589.6h0.5M12.25 591.6h0.5M21.25 591.6h0.5M23 591.6h1M24 591.6h1M26.25 591.6h0.5M27.25 591.6h0.5M28.25 591.6h0.5M12.25 593.6h0.5M17.25 593.6h0.5M19 593.6h1M20 593.6h1M8.25 595.6h0.5M9.25 595.6h0.5M4.25 597.6h0.5M7.25 601.6h0.5M8.25 601.6h0.5M16.25 601.6h0.5M26.25 601.6h0.5M27.25 601.6h0.5M4.25 603.6h0.5M17 605.6h1M25.25 605.6h0.5M33.25 605.6h0.5M41.25 605.6h0.5M42.25 605.6h0.5M43.25 605.6h0.5M15 607.6h1M17.25 607.6h0.5M23.25 607.6h0.5M32.25 607.6h0.5M33.25 607.6h0.5M39.25 607.6h0.5M40.25 607.6h0.5M41.25 607.6h0.5M43 607.6h1M53.25 607.6h0.5M54.25 607.6h0.5M60.25 607.6h0.5M61.25 607.6h0.5M63.25 607.6h0.5M65.25 607.6h0.5M66.25 607.6h0.5M67.25 607.6h0.5M8.25 609.6h0.5M11.25 609.6h0.5M17.25 609.6h0.5M24.25 609.6h0.5M26 609.6h2M34.25 609.6h0.5M39.25 609.6h0.5M40.25 609.6h0.5M46.25 609.6h0.5M47.25 609.6h0.5M51.25 609.6h0.5M54.25 609.6h0.5M55.25 609.6h0.5M57.25 609.6h0.5M61.25 609.6h0.5M64.25 609.6h0.5M65.25 609.6h0.5M66.25 609.6h0.5M67 609.6h1M73.25 609.6h0.5M74.25 609.6h0.5M80.25 609.6h0.5M81.25 609.6h0.5M89.25 609.6h0.5M90.25 609.6h0.5M91 609.6h1M97.25 609.6h0.5M98.25 609.6h0.5M103.25 609.6h0.5M104.25 609.6h0.5M8.25 611.6h0.5M9.25 611.6h0.5M11.25 611.6h0.5M12.25 611.6h0.5M14.25 611.6h0.5M19.25 611.6h0.5M20.25 611.6h0.5M21.25 611.6h0.5M22 611.6h1M24.25 611.6h0.5M28.25 611.6h0.5M29.25 611.6h0.5M30.25 611.6h0.5M31.25 611.6h0.5M33.25 611.6h0.5M19.25 613.6h0.5M16.25 615.6h0.5M21.25 615.6h0.5M23 615.6h1M24 615.6h1M27.25 615.6h0.5M16.25 617.6h0.5M23.25 617.6h0.5M25 617.6h1M26 617.6h1M28.25 617.6h0.5M34.25 617.6h0.5M35.25 617.6h0.5" stroke="#000000" stroke-width="1.100" opacity="0.55" fill="none"/></svg>
<div class="b" style="left:1240px;top:340px;width:112px;height:2px;background:#cfe3f7;"></div>
<div class="b" style="left:1352px;top:87px;width:14px;height:619px;background:#ffffff;"></div>
<div class="b" style="left:1352px;top:87px;width:1px;height:619px;background:#d4d4d4;"></div>
<div class="b" style="left:1352px;top:238px;width:14px;height:61.5px;background:#c1c1c1;"></div>
<div class="b" style="left:1353px;top:334px;width:13px;height:2px;background:#3c3c3c;"></div>
<svg class="b" style="left:15px;top:710px;" width="14" height="14" viewBox="0 0 14 14"><circle cx="7" cy="7" r="6" fill="none" stroke="#fff" stroke-width="1.100"/><path d="M4.400 4.400l5.200 5.200M9.600 4.400l-5.200 5.200" stroke="#fff" stroke-width="1.100"/></svg>
<span class="t" style="left:32.0px;top:707.5px;font-size:12px;color:#ffffff;">0</span>
<svg class="b" style="left:42px;top:710px;" width="14" height="14" viewBox="0 0 14 14"><path d="M7 1.600L13 12.400H1z" fill="none" stroke="#fff" stroke-width="1.100" stroke-linejoin="round"/><path d="M7 5.200v3.800M7 10v1.300" stroke="#fff" stroke-width="1.100"/></svg>
<span class="t" style="left:59.5px;top:707.5px;font-size:12px;color:#ffffff;">0</span>
<span class="t" style="left:1024.0px;top:707.5px;font-size:12px;color:#ffffff;letter-spacing:-0.218px;">Ln 127, Col 24</span>
<span class="t" style="left:1114.0px;top:707.5px;font-size:11.9px;color:#ffffff;letter-spacing:-0.436px;">Spaces: 4</span>
<span class="t" style="left:1179.0px;top:707.5px;font-size:12px;color:#ffffff;letter-spacing:-0.399px;">UTF-8</span>
<span class="t" style="left:1226.0px;top:707.5px;font-size:11px;color:#ffffff;letter-spacing:-0.431px;">CRLF</span>
<span class="t" style="left:1269.0px;top:707.5px;font-size:10.9px;color:#ffffff;letter-spacing:-0.471px;">PHP</span>
<svg class="b" style="left:1306px;top:709px;" width="16" height="16" viewBox="0 0 16 16"><circle cx="7.500" cy="4.500" r="3" fill="none" stroke="#fff" stroke-width="1.100"/><path d="M1.500 14.500C2 10.500 4.500 8.800 7.500 8.800S13 10.500 13.500 14.500M9.500 8.600L14.500 7" fill="none" stroke="#fff" stroke-width="1.150"/></svg>
<svg class="b" style="left:1336px;top:709px;" width="16" height="16" viewBox="0 0 16 16"><path d="M4.200 9.500V6.300a3.800 3.800 0 0 1 7.600 0V9.500L13.400 12.300H2.600Z" fill="none" stroke="#fff" stroke-width="1.100" stroke-linejoin="round"/><path d="M6.700 12.900a1.300 1.300 0 0 0 2.600 0" fill="none" stroke="#fff" stroke-width="1.100"/></svg>
<svg class="b" style="left:16px;top:740px;" width="16" height="16" viewBox="0 0 16 16"><path fill="#fff" d="M0 2.300L6.500 1.400V7.600H0zM7.300 1.300L16 0V7.600H7.300zM0 8.400H6.500V14.600L0 13.700zM7.300 8.400H16V16L7.300 14.700z"/></svg>
<svg class="b" style="left:62px;top:738px;" width="20" height="20" viewBox="0 0 20 20"><circle cx="12" cy="7.500" r="5.300" fill="none" stroke="#fff" stroke-width="1.300"/><path d="M8.400 11.500L2 18" stroke="#fff" stroke-width="1.300"/></svg>
<svg class="b" style="left:110px;top:738px;" width="20" height="20" viewBox="0 0 20 20"><circle cx="10" cy="10" r="6.700" fill="none" stroke="#fff" stroke-width="2"/></svg>
<svg class="b" style="left:158px;top:738px;" width="20" height="18" viewBox="0 0 20 18"><path d="M2.400 2v2.200h10.250V2M2.400 16.900v-2.200h10.250v2.200M16.600 2v2.800M16.600 10v7" fill="none" stroke="#fff" stroke-width="1.200"/><rect x="2.400" y="6.700" width="10.250" height="5.500" fill="none" stroke="#fff" stroke-width="1.200"/><rect x="15.100" y="6" width="3.100" height="2.800" fill="#fff"/></svg>
<svg class="b" style="left:207px;top:736px;" width="24" height="24" viewBox="0 0 24 24"><circle cx="12" cy="12" r="11.400" fill="#34a853"/><path fill="#ea4335" d="M12 .500a11.500 11.500 0 0 1 9.960 5.750H12a5.750 5.750 0 0 0-4.980 2.875L2.040 6.250A11.500 11.500 0 0 1 12 .500z"/><path fill="#34a853" d="M2.040 6.250l4.980 8.625A5.750 5.750 0 0 0 12 17.750l-3 5.350A11.500 11.500 0 0 1 2.040 6.250z"/><path fill="#fbbc04" d="M21.960 6.250A11.500 11.500 0 0 1 9 23.100l4.980-8.225A5.750 5.750 0 0 0 16.980 9.125 5.700 5.700 0 0 0 12 6.250z"/><circle cx="12" cy="12" r="5.200" fill="#fff"/><circle cx="12" cy="12" r="4.200" fill="#4285f4"/></svg>
<svg class="b" style="left:256px;top:736px;" width="24" height="24" viewBox="0 0 24 24"><defs><linearGradient id="eg1" x1="0" y1="0" x2="1" y2="1"><stop offset="0" stop-color="#35c1f1"/><stop offset="1" stop-color="#0b57b3"/></linearGradient><linearGradient id="eg2" x1="0" y1="0" x2="1" y2="0"><stop offset="0" stop-color="#2fbfdd"/><stop offset="1" stop-color="#6fd24b"/></linearGradient></defs><circle cx="12" cy="12" r="11.500" fill="url(#eg1)"/><path fill="url(#eg2)" d="M1 10C2 4 6.500.500 12 .500c6 0 11 4 11.500 9.500 0 3-2 5-5 5-2 0-3.500-.800-3.500-1.800 0-.700 1-1 1-2.700C16 8 14 6 11 6 6.500 6 2 8 1 10z"/><path fill="#0c4a99" d="M8 12c0 5 3.500 9 9 9 1.600 0 3-.400 4-1-2 2.800-5.200 4.500-9 4.500C6.500 24.500 2.500 20 2.500 16 2.500 12.500 5.500 10 9 10c-.600.600-1 1.200-1 2z" opacity=".85"/></svg>
<svg class="b" style="left:305px;top:735px;" width="24" height="26" viewBox="0 0 24 26"><defs><radialGradient id="ff1" cx=".6" cy=".2" r=".9"><stop offset="0" stop-color="#ffde3c"/><stop offset=".45" stop-color="#ff8a16"/><stop offset=".85" stop-color="#f0335a"/><stop offset="1" stop-color="#d6237a"/></radialGradient></defs><path fill="url(#ff1)" d="M12 3.500c1.500-1 2.500-2.300 2.800-3.500 2.200 1.500 3.200 3.500 3.500 5.200 1-.300 1.700-1 2-1.700 2 2.500 3.200 5.500 3.200 9C23.500 19.500 18.500 25 12 25S.500 19.500.500 13.500c0-3 1-5.500 2.700-7.500.100 1 .500 1.800 1 2.300C5 6 8 3.800 12 3.500z"/><circle cx="12.500" cy="14" r="5.200" fill="#7a3fe0"/><path fill="#ff9a1f" d="M6 11c1.500-1.500 4-2 6-1-2 .500-3 1.800-3 3.500 0 2 1.700 3.700 4 3.700 2 0 3.800-1.200 4.300-3 .700 3.800-2 7-5.800 7-3.700 0-6.500-3-6.500-6.500 0-1.400.400-2.700 1-3.700z"/></svg>
<svg class="b" style="left:354px;top:738px;" width="24" height="20" viewBox="0 0 24 20"><path fill="#e0a526" d="M1 2.500c0-.800.600-1.500 1.500-1.500h6l2 2.500H21c.800 0 1.500.700 1.500 1.500v2H1z"/><path fill="#fdd765" d="M1 5.500h21.500V17c0 .800-.700 1.500-1.500 1.500H2.500C1.700 18.500 1 17.800 1 17z"/><path fill="#3a93e3" d="M5 11H19.200V18.500H15.500V14.600H9V18.500H5z"/></svg>
<div class="b" style="left:391px;top:728px;width:48px;height:40px;background:#94272a;"></div>
<svg class="b" style="left:403px;top:736px;" width="24" height="24" viewBox="0 0 100 100"><path fill="#1b74b8" d="M74 1L74 28L12 75.500L6.500 75L1.200 70V63.500Z"/><path fill="#1f8bd6" d="M74 99L74 72L12 24.500L6.500 25L1.200 30V36.500Z"/><path fill="#3aa8f3" d="M74 1L96.500 10.800Q100 12.500 100 16.400V83.600Q100 87.500 96.500 89.200L74 99Z"/></svg>
<div class="b" style="left:452.2px;top:736.2px;width:23.8px;height:23.4px;background:#b50000;border:1px dashed #7a0000;box-sizing:border-box;background:linear-gradient(#c00000,#a30000)"></div>
<span class="t" style="left:455px;top:736.500px;font-size:20px;line-height:22px;height:22px;color:#fff;font-weight:700;font-style:italic;letter-spacing:-1.800px">Fz</span>
<svg class="b" style="left:501px;top:735.5px;" width="21" height="24" viewBox="0 0 21 24"><ellipse cx="10.200" cy="21.600" rx="4.600" ry="1.700" fill="#9fb0cc" opacity=".85"/><g stroke="#e9eef7" stroke-width="1.300" stroke-linejoin="round"><path fill="#17335f" d="M10.200 1L19.300 5.300L10.200 9.800L1.100 5.300Z"/><path fill="#132c55" d="M1.100 5.300L10.200 9.800V20.100L1.100 15.600Z"/><path fill="#0f2548" d="M19.300 5.300L10.200 9.800V20.100L19.300 15.600Z"/></g></svg>
<div class="b" style="left:551.2px;top:736.8px;width:21px;height:19.4px;background:#1a1450;border:1.200px solid #8fc4ff;box-sizing:border-box"></div>
<span class="t" style="left:555.600px;top:737.500px;font-size:11.500px;line-height:19px;height:19px;color:#93c6ff;font-weight:700;letter-spacing:-.2px">Ps</span>
<div class="b" style="left:600.1px;top:736.8px;width:21.1px;height:19.4px;background:#2a0838;border:1.200px solid #e27cf7;box-sizing:border-box"></div>
<span class="t" style="left:605.200px;top:737.500px;font-size:11.500px;line-height:19px;height:19px;color:#e87fff;font-weight:700;letter-spacing:-.2px">Pr</span>
<svg class="b" style="left:648px;top:736px;" width="24" height="24" viewBox="0 0 24 24"><defs><linearGradient id="cg" x1="0" y1="0" x2="0" y2="1"><stop offset="0" stop-color="#6ec41f"/><stop offset="1" stop-color="#3c960b"/></linearGradient></defs><rect x="0" y="0" width="24" height="24" rx="3" fill="url(#cg)"/><path fill="#fff" d="M20 3.300H8.800L4.600 7.500v9.200l4.200 4.200H20l-3.400-4.100H10.400L8.800 15.300V8.900l1.600-1.500h6.200z"/><path fill="#d3edbb" d="M4.600 7.500L8.800 8.900v6.400L4.600 16.700z"/></svg>
<svg class="b" style="left:698px;top:736.5px;" width="22" height="22" viewBox="0 0 22 22"><circle cx="11" cy="11" r="11" fill="#ff6c37"/><path d="M5.200 17L9.500 12.400" stroke="#fff" stroke-width="1.300"/><path fill="#fff" d="M8.600 13.600l1.500-4 3.400-3.300 2.500 2.500-3.400 3.400z"/><circle cx="15.700" cy="6.300" r="1.700" fill="#fff"/></svg>
<svg class="b" style="left:746px;top:736px;" width="23" height="22" viewBox="0 0 23 22"><rect x=".600" y=".600" width="20.800" height="20.600" fill="#eef3fb" stroke="#2a56a8" stroke-width="1.200"/><path fill="#fff" d="M2 13.500l18-3v10H2z"/><path d="M3 16.500l16-2.500M3 19l16-2.500" stroke="#b6c7e4" stroke-width="1"/><path fill="#f7f9fd" stroke="#c3cfe6" stroke-width=".600" d="M15.500 11.500l7 2.500-2 5.500-7-2.500z"/></svg>
<span class="t" style="left:748.500px;top:733.500px;font-size:18.500px;line-height:22px;height:22px;color:#1b57b8;font-weight:700;letter-spacing:-1px;transform:scaleX(.92);transform-origin:0 0">W</span>
<div class="b" style="left:199px;top:766px;width:40px;height:2px;background:#fbaab0;"></div>
<div class="b" style="left:346px;top:766px;width:31px;height:2px;background:#fbaab0;"></div>
<div class="b" style="left:378.5px;top:766px;width:7px;height:2px;background:#fbaab0;"></div>
<div class="b" style="left:391px;top:766px;width:48px;height:2px;background:#fbaab0;"></div>
<div class="b" style="left:444px;top:766px;width:40px;height:2px;background:#fbaab0;"></div>
<div class="b" style="left:689px;top:766px;width:40px;height:2px;background:#fbaab0;"></div>
<div class="b" style="left:738px;top:766px;width:40px;height:2px;background:#fbaab0;"></div>
<div class="b" style="left:945.500px;top:738.500px;width:20px;height:20px;border-radius:50%;background:radial-gradient(circle at 40% 35%,#fbb82a,#f58a1c 70%,#ee6e1b)"></div>
<span class="t" style="left:976.0px;top:738.0px;font-size:14.5px;color:#ffffff;letter-spacing:-0.996px;">78°F</span>
<span class="t" style="left:1012.0px;top:738.0px;font-size:14.5px;color:#ffffff;letter-spacing:-0.683px;">Sunny</span>
<svg class="b" style="left:1073px;top:741px;" width="16" height="14" viewBox="0 0 16 14"><path d="M2 10l6-6 6 6" fill="none" stroke="#fff" stroke-width="1.300"/></svg>
<svg class="b" style="left:1096px;top:739px;" width="18" height="18" viewBox="0 0 18 18"><rect x="4.300" y="6.100" width="6.600" height="6.100" rx="1.300" fill="none" stroke="#fff" stroke-width="1.150"/><path d="M11.200 8.300l3.300-1.900v5.500l-3.300-1.900" fill="none" stroke="#fff" stroke-width="1.150" stroke-linejoin="round"/><path d="M4.600 3.300c1.800-1.700 4.600-1.700 6.400 0M4.600 15.200c1.800 1.700 4.600 1.700 6.400 0" fill="none" stroke="#fff" stroke-width="1" opacity=".9"/></svg>
<svg class="b" style="left:1121px;top:742.5px;" width="17" height="11" viewBox="0 0 17 11"><path fill="#c9a3a2" d="M4.500 10.500h9c1.900 0 3-1.200 3-2.700 0-1.400-1-2.500-2.400-2.700C13.800 2.400 12 .500 9.700.500 8.100.500 6.700 1.400 6 2.700 5.700 2.600 5.400 2.600 5.100 2.600c-1.800 0-3.300 1.500-3.300 3.300v.400C.700 6.700 0 7.600 0 8.600c0 1.100.900 1.900 2 1.900z"/><path fill="#fdfafa" d="M2 10.500C.900 10.500 0 9.700 0 8.600 0 7.600.700 6.700 1.800 6.300L9.500 4l7 3.500v.300c0 1.500-1.100 2.700-3 2.700z"/></svg>
<svg class="b" style="left:1146px;top:741px;" width="16" height="16" viewBox="0 0 16 16"><path d="M2 13.500A11 11 0 0 1 13 2.200M5.400 13.900A7.600 7.600 0 0 1 13 5.700M8.700 14.200A4.400 4.400 0 0 1 13 9.200" fill="none" stroke="#fff" stroke-width="1.200"/><circle cx="12.500" cy="12.400" r="1.500" fill="#fff"/></svg>
<svg class="b" style="left:1167px;top:741px;" width="20" height="14" viewBox="0 0 20 14"><rect x="6.600" y="3.600" width="10" height="7.200" fill="none" stroke="#fff" stroke-width="1.200"/><rect x="17.200" y="5.300" width="1.300" height="3.800" fill="#fff"/><rect x="8" y="5" width="5" height="4.400" fill="#fff" opacity=".35"/><path d="M2.900 1.300v2.400M5.100 1.300v2.400" stroke="#fff" stroke-width="1"/><path d="M1.800 3.600h4.400v2.200c0 1-.800 1.800-1.700 1.800h-1c-.900 0-1.700-.800-1.700-1.800z" fill="#fff"/><path d="M4 7v3.800h2.600" fill="none" stroke="#fff" stroke-width="1.100"/></svg>
<svg class="b" style="left:1191px;top:740px;" width="20" height="16" viewBox="0 0 20 16"><path d="M2.300 5.500h2.500l3.300-3.300v11.600l-3.300-3.300H2.300z" fill="none" stroke="#fff" stroke-width="1.150" stroke-linejoin="round"/><path d="M10.300 5.600a3.400 3.400 0 0 1 0 4.800M12.300 3.600a6.200 6.200 0 0 1 0 8.800" fill="none" stroke="#fff" stroke-width="1.100"/><path d="M14.600 1.500a9.300 9.300 0 0 1 0 13" fill="none" stroke="#fff" stroke-width="1" opacity=".4"/></svg>
<span class="t" style="left:1219.0px;top:738.0px;font-size:11.2px;color:#ffffff;letter-spacing:-0.423px;">ENG</span>
<span class="t" style="left:1256.0px;top:729.0px;font-size:12px;color:#ffffff;letter-spacing:-0.338px;">10:46 AM</span>
<span class="t" style="left:1256.0px;top:747.5px;font-size:12px;color:#ffffff;letter-spacing:-0.210px;">11/3/2022</span>
<svg class="b" style="left:1325px;top:739px;" width="17" height="17" viewBox="0 0 17 17"><path fill="#fff" d="M.500 1h15.500v11.500H8.500L5 16v-3.500H.500z"/><path d="M3 4h10.500M3 6.500h10.500M3 9h7" stroke="#632a25" stroke-width="1"/></svg>
<div class="b" style="left:1333.500px;top:748px;width:15px;height:15px;border-radius:50%;background:#8c1d24;border:1.200px solid #c98d92;box-sizing:border-box"></div>
<span class="t" style="left:1337.6px;top:745.3px;font-size:11.5px;color:#ffffff;font-weight:700;">4</span>
<div class="b" style="left:1361px;top:728px;width:1px;height:40px;background:#8a5a56;"></div>
<div class="b" style="left:1170px;top:585px;width:196px;height:131px;background:#982a33;"></div>
<div class="b" style="left:1186px;top:604px;width:16px;height:16px;background:#474543;"></div>
<svg class="b" style="left:1186px;top:604px;" width="16" height="16" viewBox="0 0 16 16"><path fill="#f6d264" d="M4.200 2.500h4.200v9.800H4.200z"/><path fill="#e2b43c" d="M4.200 2.500h1v9.800h-1z"/><path fill="#2b8de8" d="M8 13h5c1 0 1.700-.700 1.700-1.500 0-.800-.600-1.400-1.400-1.500-.200-1.100-1.100-1.900-2.300-1.900-.900 0-1.700.500-2.100 1.200C7.800 9.400 7 10.200 7 11.300 7 12.200 7.400 13 8 13z"/></svg>
<span class="t" style="left:1210.4px;top:602.0px;font-size:12.4px;color:#ffffff;letter-spacing:-0.409px;">OneDrive</span>
<svg class="b" style="left:1188px;top:648px;" width="57" height="37" viewBox="0 0 57 37"><circle cx="28" cy="16.500" r="16.500" fill="#0e62b5"/><circle cx="12.500" cy="21.500" r="12.500" fill="#1a7bd3"/><path fill="#1670c6" d="M14 9.200c6 0 13 4 18 8.300L20 23z" opacity=".6"/><circle cx="45" cy="24.500" r="11" fill="#1d8be1"/><path fill="#2ba4ed" d="M32.500 17L2 29.500C3.500 33.500 7.500 36 12.500 36H45c4.500 0 8.500-2.600 10-6.500z"/><path fill="#2397e6" d="M32.500 17L55 29.500C53.500 33.500 49.500 36 45 36H30z" opacity=".55"/></svg>
<span class="t" style="left:1262.5px;top:635.5px;font-size:14px;color:#ffffff;letter-spacing:-0.419px;font-weight:700;">Screenshot save</span>
<span class="t" style="left:1262.5px;top:656.0px;font-size:15px;color:#dba3a8;letter-spacing:-0.328px;">The screenshot</span>
<span class="t" style="left:1262.5px;top:675.5px;font-size:15px;color:#dba3a8;letter-spacing:-0.225px;">OneDrive.</span>
</body></html>
